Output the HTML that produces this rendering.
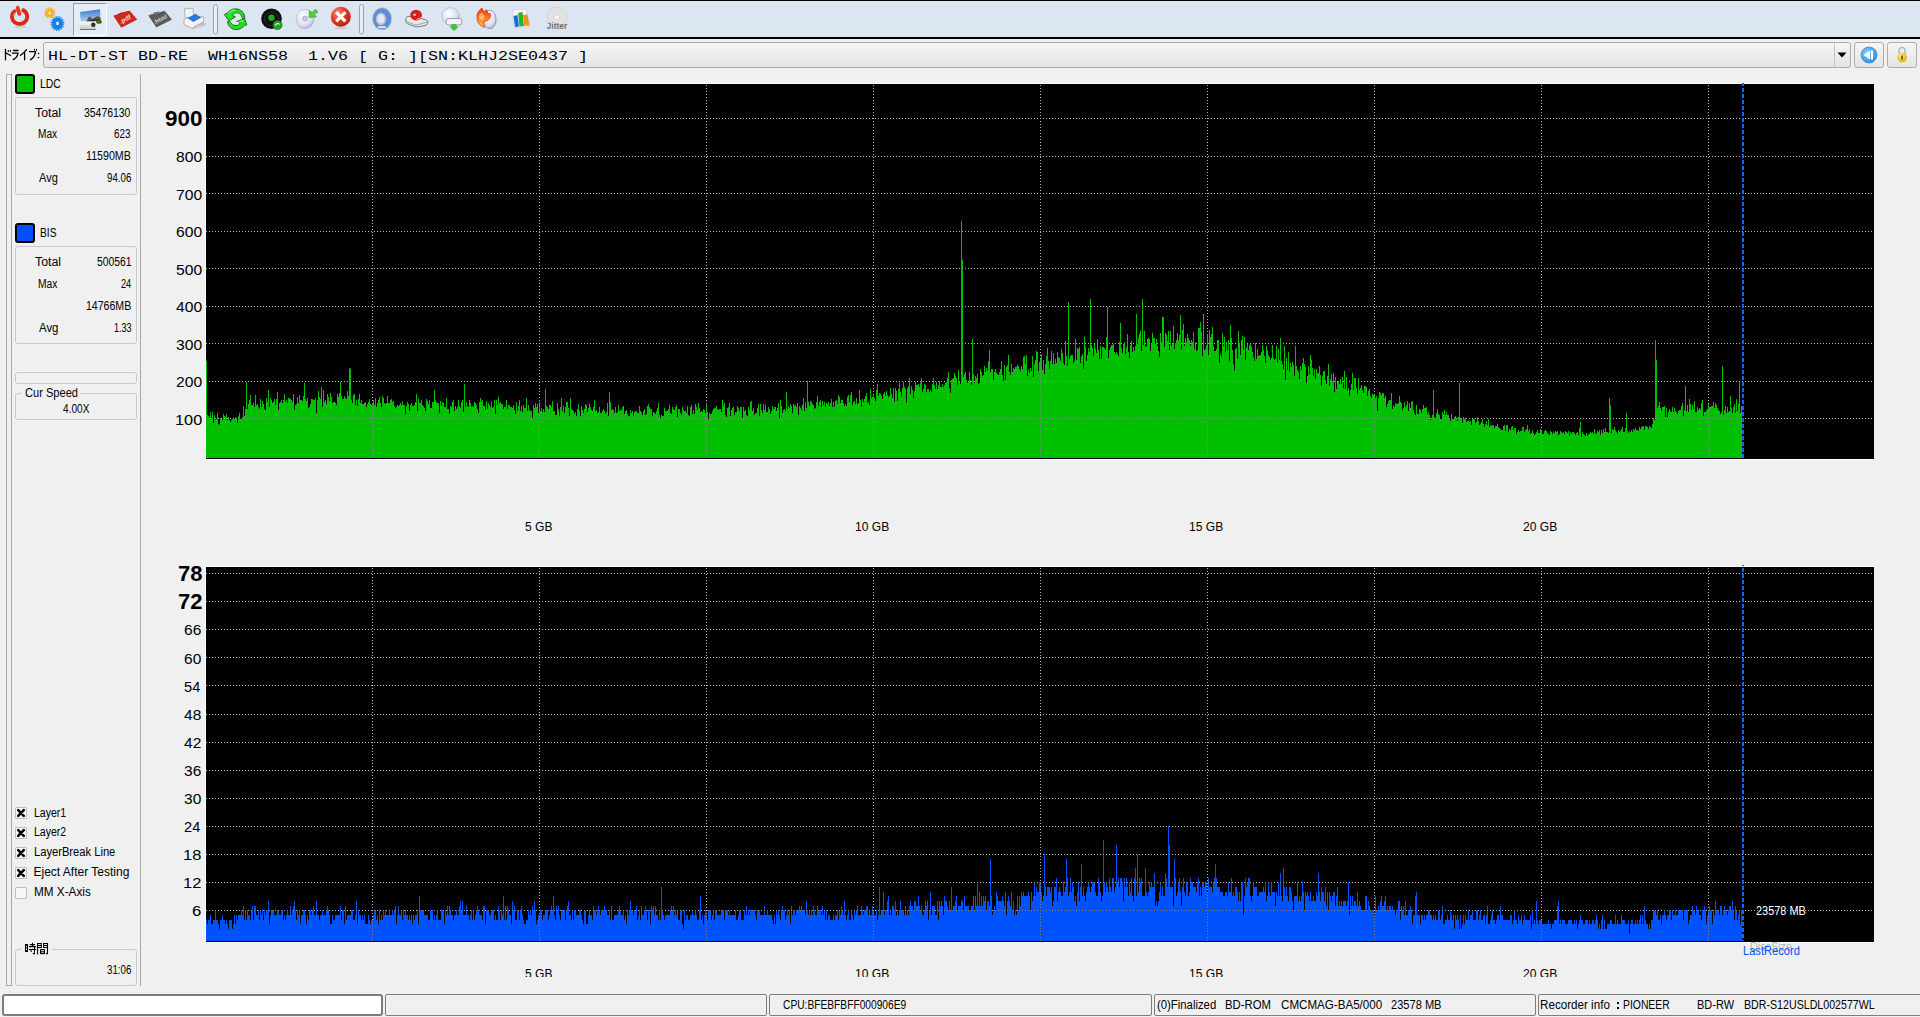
<!DOCTYPE html>
<html><head><meta charset="utf-8"><title>PX-Test</title>
<style>
html,body{margin:0;padding:0}
body{width:1920px;height:1017px;overflow:hidden;background:#f0f0f0;position:relative;font-family:"Liberation Sans",sans-serif;color:#000}
.charts{position:absolute;left:0;top:0}
.t{position:absolute;white-space:pre;line-height:1}
.r{text-align:right}
.b{position:absolute;box-sizing:border-box}
#tb{position:absolute;left:0;top:0;width:1920px;height:39px;box-sizing:border-box;background:#dce6f3;border-top:1px solid #000;border-bottom:2px solid #000}
.grp{position:absolute;box-sizing:border-box;border:1px solid #c9c9c9;border-radius:3px}
.cb{position:absolute;box-sizing:border-box;width:12px;height:12px;border:1px solid #bdbdbd;background:#f7f7f7;border-radius:1px}
.btn{position:absolute;box-sizing:border-box;border:1px solid #adadad;border-radius:3px;background:linear-gradient(#f4f4f4,#e2e2e2)}
.sp{position:absolute;box-sizing:border-box;border:1px solid #7d7d7d;border-radius:2px;background:#f0f0f0;top:994px;height:22px}

</style></head>
<body>

<svg class="charts" width="1920" height="1017" viewBox="0 0 1920 1017" shape-rendering="crispEdges">
 <defs>
  <clipPath id="cpL"><path d="M206 458V361H207V415H208V416H209V419H210V412H211V418H212V412H213V423H214V415H215V420H216V419H217V413H218V424H219V425H220V418H221V419H222V420H223V414H224V416H225V417H226V414H227V420H228V417H229V420H230V422H231V420H232V419H233V419H234V419H235V417H236V418H237V423H238V416H239V413H240V419H241V419H242V417H243V406H244V416H245V409H246V382H247V409H248V404H249V400H250V395H251V405H252V405H253V403H254V407H255V395H256V405H257V404H258V407H259V409H260V399H261V407H262V401H263V404H264V409H265V410H266V398H267V402H268V390H269V407H270V398H271V400H272V403H273V402H274V399H275V405H276V399H277V392H278V410H279V403H280V402H281V400H282V403H283V400H284V394H285V402H286V400H287V403H288V398H289V398H290V399H291V400H292V402H293V394H294V410H295V405H296V404H297V397H298V403H299V395H300V400H301V400H302V401H303V396H304V383H305V399H306V401H307V398H308V408H309V407H310V404H311V399H312V399H313V400H314V400H315V398H316V413H317V400H318V391H319V397H320V399H321V387H322V407H323V390H324V402H325V400H326V404H327V394H328V397H329V401H330V393H331V397H332V403H333V402H334V402H335V403H336V405H337V394H338V397H339V393H340V382H341V396H342V399H343V399H344V396H345V398H346V399H347V391H348V396H349V368H350V369H351V400H352V403H353V395H354V394H355V405H356V400H357V406H358V399H359V394H360V403H361V400H362V404H363V404H364V403H365V402H366V407H367V404H368V402H369V399H370V404H371V405H372V403H373V400H374V405H375V398H376V407H377V403H378V400H379V397H380V403H381V407H382V396H383V398H384V403H385V404H386V403H387V396H388V403H389V403H390V400H391V399H392V402H393V401H394V406H395V408H396V407H397V405H398V406H399V405H400V403H401V405H402V401H403V405H404V405H405V414H406V406H407V402H408V404H409V411H410V405H411V403H412V406H413V406H414V405H415V402H416V394H417V411H418V399H419V403H420V403H421V400H422V405H423V406H424V408H425V411H426V399H427V401H428V404H429V400H430V408H431V408H432V402H433V402H434V390H435V400H436V402H437V403H438V403H439V413H440V401H441V406H442V402H443V403H444V407H445V407H446V398H447V409H448V409H449V414H450V406H451V407H452V402H453V400H454V411H455V406H456V409H457V407H458V400H459V406H460V408H461V402H462V400H463V412H464V384H465V407H466V402H467V406H468V407H469V400H470V403H471V407H472V406H473V407H474V402H475V403H476V405H477V409H478V413H479V402H480V398H481V402H482V400H483V406H484V406H485V410H486V401H487V409H488V403H489V405H490V407H491V402H492V408H493V407H494V400H495V414H496V400H497V405H498V397H499V403H500V402H501V404H502V404H503V409H504V407H505V407H506V400H507V409H508V405H509V405H510V407H511V407H512V408H513V405H514V410H515V414H516V402H517V411H518V406H519V400H520V411H521V406H522V412H523V405H524V408H525V408H526V398H527V411H528V405H529V410H530V411H531V411H532V418H533V405H534V408H535V403H536V407H537V404H538V413H539V402H540V411H541V408H542V412H543V409H544V412H545V389H546V406H547V407H548V409H549V405H550V405H551V407H552V401H553V411H554V411H555V415H556V415H557V403H558V409H559V416H560V407H561V398H562V411H563V406H564V413H565V407H566V402H567V402H568V408H569V416H570V398H571V409H572V410H573V411H574V414H575V412H576V416H577V409H578V404H579V411H580V416H581V406H582V410H583V413H584V409H585V404H586V405H587V412H588V408H589V404H590V407H591V410H592V411H593V407H594V400H595V411H596V410H597V413H598V412H599V407H600V413H601V413H602V411H603V409H604V411H605V414H606V412H607V403H608V416H609V392H610V402H611V410H612V409H613V410H614V413H615V407H616V413H617V412H618V405H619V411H620V410H621V410H622V407H623V406H624V414H625V411H626V410H627V414H628V416H629V416H630V410H631V413H632V411H633V416H634V412H635V411H636V411H637V413H638V413H639V406H640V411H641V412H642V415H643V411H644V409H645V415H646V414H647V406H648V404H649V407H650V409H651V409H652V416H653V412H654V413H655V414H656V411H657V408H658V403H659V415H660V418H661V415H662V416H663V416H664V408H665V411H666V411H667V411H668V409H669V405H670V413H671V414H672V407H673V409H674V410H675V407H676V405H677V417H678V409H679V409H680V413H681V415H682V407H683V410H684V411H685V411H686V413H687V406H688V415H689V416H690V407H691V405H692V414H693V410H694V414H695V404H696V407H697V410H698V403H699V408H700V412H701V411H702V412H703V409H704V410H705V413H706V403H707V412H708V419H709V413H710V414H711V414H712V411H713V409H714V408H715V408H716V406H717V409H718V410H719V409H720V409H721V412H722V400H723V406H724V403H725V415H726V417H727V408H728V407H729V403H730V416H731V410H732V408H733V407H734V415H735V412H736V412H737V406H738V408H739V411H740V407H741V407H742V418H743V407H744V411H745V410H746V415H747V416H748V407H749V410H750V402H751V401H752V411H753V408H754V415H755V413H756V413H757V408H758V404H759V416H760V404H761V410H762V413H763V404H764V410H765V405H766V412H767V412H768V407H769V409H770V414H771V411H772V406H773V409H774V407H775V407H776V411H777V408H778V403H779V418H780V400H781V406H782V413H783V410H784V409H785V411H786V392H787V409H788V406H789V408H790V404H791V406H792V413H793V404H794V406H795V405H796V407H797V403H798V415H799V406H800V408H801V410H802V405H803V398H804V411H805V402H806V408H807V381H808V402H809V406H810V401H811V402H812V404H813V405H814V409H815V408H816V402H817V396H818V406H819V402H820V400H821V407H822V401H823V405H824V402H825V407H826V403H827V404H828V402H829V406H830V403H831V399H832V407H833V402H834V407H835V401H836V400H837V404H838V395H839V397H840V403H841V400H842V400H843V403H844V406H845V404H846V406H847V397H848V395H849V402H850V395H851V392H852V405H853V402H854V401H855V404H856V398H857V404H858V403H859V390H860V400H861V407H862V399H863V402H864V399H865V396H866V393H867V403H868V402H869V405H870V389H871V398H872V397H873V396H874V398H875V401H876V390H877V384H878V396H879V393H880V394H881V396H882V399H883V394H884V392H885V396H886V391H887V395H888V397H889V396H890V388H891V394H892V398H893V388H894V402H895V388H896V391H897V401H898V389H899V383H900V392H901V397H902V388H903V382H904V387H905V389H906V403H907V388H908V386H909V378H910V394H911V386H912V390H913V398H914V391H915V382H916V385H917V385H918V384H919V387H920V383H921V378H922V392H923V389H924V384H925V385H926V392H927V389H928V389H929V392H930V390H931V392H932V384H933V378H934V385H935V389H936V382H937V389H938V385H939V381H940V387H941V387H942V384H943V387H944V385H945V383H946V382H947V378H948V372H949V388H950V393H951V380H952V379H953V378H954V373H955V376H956V378H957V385H958V370H959V382H960V384H961V221H962V260H963V377H964V374H965V372H966V380H967V383H968V382H969V372H970V380H971V385H972V339H973V374H974V383H975V376H976V378H977V374H978V384H979V383H980V369H981V372H982V376H983V375H984V366H985V372H986V368H987V371H988V361H989V350H990V372H991V369H992V369H993V380H994V372H995V369H996V373H997V374H998V375H999V372H1000V369H1001V361H1002V375H1003V381H1004V365H1005V380H1006V367H1007V365H1008V355H1009V372H1010V375H1011V364H1012V372H1013V368H1014V369H1015V367H1016V367H1017V365H1018V366H1019V369H1020V371H1021V366H1022V369H1023V357H1024V356H1025V364H1026V355H1027V376H1028V370H1029V373H1030V368H1031V371H1032V356H1033V377H1034V364H1035V360H1036V351H1037V352H1038V371H1039V362H1040V359H1041V354H1042V370H1043V360H1044V374H1045V364H1046V356H1047V348H1048V361H1049V369H1050V361H1051V351H1052V364H1053V353H1054V364H1055V359H1056V363H1057V352H1058V357H1059V358H1060V361H1061V349H1062V353H1063V363H1064V365H1065V341H1066V356H1067V366H1068V302H1069V359H1070V356H1071V355H1072V355H1073V363H1074V361H1075V339H1076V360H1077V348H1078V349H1079V347H1080V363H1081V356H1082V354H1083V369H1084V337H1085V347H1086V361H1087V355H1088V348H1089V352H1090V299H1091V345H1092V348H1093V356H1094V344H1095V349H1096V353H1097V339H1098V350H1099V359H1100V346H1101V359H1102V347H1103V347H1104V348H1105V350H1106V337H1107V307H1108V358H1109V350H1110V347H1111V345H1112V345H1113V344H1114V352H1115V354H1116V352H1117V354H1118V356H1119V342H1120V323H1121V348H1122V353H1123V344H1124V342H1125V354H1126V347H1127V334H1128V352H1129V358H1130V345H1131V341H1132V352H1133V347H1134V351H1135V346H1136V314H1137V344H1138V338H1139V334H1140V331H1141V351H1142V299H1143V345H1144V331H1145V347H1146V346H1147V339H1148V338H1149V339H1150V351H1151V343H1152V333H1153V338H1154V338H1155V344H1156V339H1157V346H1158V351H1159V357H1160V333H1161V342H1162V317H1163V317H1164V347H1165V333H1166V335H1167V341H1168V331H1169V350H1170V331H1171V346H1172V344H1173V326H1174V349H1175V343H1176V340H1177V333H1178V340H1179V335H1180V315H1181V349H1182V330H1183V324H1184V346H1185V338H1186V342H1187V334H1188V338H1189V340H1190V346H1191V340H1192V342H1193V332H1194V349H1195V342H1196V351H1197V350H1198V328H1199V328H1200V322H1201V332H1202V356H1203V314H1204V350H1205V349H1206V345H1207V334H1208V355H1209V330H1210V337H1211V334H1212V327H1213V346H1214V351H1215V351H1216V349H1217V340H1218V340H1219V363H1220V354H1221V357H1222V333H1223V346H1224V337H1225V352H1226V342H1227V351H1228V340H1229V361H1230V325H1231V338H1232V350H1233V364H1234V371H1235V349H1236V348H1237V359H1238V331H1239V343H1240V355H1241V340H1242V336H1243V350H1244V337H1245V360H1246V348H1247V344H1248V350H1249V345H1250V344H1251V347H1252V352H1253V357H1254V361H1255V343H1256V359H1257V349H1258V356H1259V355H1260V355H1261V352H1262V345H1263V350H1264V356H1265V363H1266V346H1267V350H1268V355H1269V357H1270V360H1271V358H1272V345H1273V358H1274V360H1275V359H1276V346H1277V363H1278V349H1279V360H1280V338H1281V361H1282V364H1283V369H1284V346H1285V380H1286V358H1287V370H1288V352H1289V372H1290V363H1291V367H1292V362H1293V365H1294V376H1295V346H1296V366H1297V370H1298V372H1299V379H1300V366H1301V370H1302V363H1303V358H1304V364H1305V367H1306V383H1307V376H1308V366H1309V374H1310V355H1311V360H1312V368H1313V376H1314V369H1315V379H1316V369H1317V373H1318V373H1319V366H1320V375H1321V386H1322V376H1323V371H1324V371H1325V380H1326V384H1327V376H1328V364H1329V386H1330V379H1331V374H1332V381H1333V373H1334V392H1335V377H1336V389H1337V382H1338V381H1339V384H1340V379H1341V384H1342V377H1343V388H1344V371H1345V389H1346V377H1347V391H1348V388H1349V396H1350V390H1351V384H1352V373H1353V390H1354V378H1355V378H1356V388H1357V394H1358V378H1359V390H1360V388H1361V385H1362V390H1363V393H1364V386H1365V386H1366V387H1367V396H1368V391H1369V389H1370V396H1371V398H1372V394H1373V395H1374V395H1375V398H1376V396H1377V411H1378V398H1379V392H1380V393H1381V395H1382V393H1383V393H1384V398H1385V396H1386V407H1387V404H1388V401H1389V400H1390V400H1391V393H1392V409H1393V405H1394V407H1395V403H1396V404H1397V404H1398V403H1399V396H1400V402H1401V403H1402V410H1403V408H1404V402H1405V407H1406V405H1407V401H1408V411H1409V403H1410V408H1411V402H1412V401H1413V410H1414V413H1415V415H1416V405H1417V414H1418V414H1419V409H1420V410H1421V413H1422V409H1423V405H1424V408H1425V408H1426V407H1427V414H1428V412H1429V415H1430V420H1431V418H1432V415H1433V390H1434V417H1435V418H1436V413H1437V409H1438V414H1439V415H1440V419H1441V419H1442V412H1443V414H1444V410H1445V415H1446V412H1447V415H1448V415H1449V418H1450V421H1451V414H1452V419H1453V419H1454V417H1455V416H1456V418H1457V421H1458V417H1459V383H1460V419H1461V418H1462V423H1463V417H1464V419H1465V418H1466V422H1467V421H1468V420H1469V422H1470V421H1471V425H1472V419H1473V419H1474V419H1475V423H1476V422H1477V417H1478V421H1479V425H1480V424H1481V422H1482V419H1483V424H1484V427H1485V424H1486V421H1487V425H1488V419H1489V427H1490V425H1491V426H1492V425H1493V425H1494V428H1495V426H1496V426H1497V424H1498V427H1499V428H1500V429H1501V430H1502V430H1503V426H1504V425H1505V431H1506V425H1507V425H1508V432H1509V429H1510V430H1511V427H1512V426H1513V430H1514V428H1515V428H1516V434H1517V432H1518V430H1519V432H1520V431H1521V431H1522V427H1523V427H1524V432H1525V430H1526V429H1527V425H1528V431H1529V429H1530V434H1531V433H1532V430H1533V433H1534V435H1535V434H1536V432H1537V430H1538V433H1539V433H1540V429H1541V430H1542V434H1543V434H1544V431H1545V430H1546V431H1547V433H1548V434H1549V435H1550V431H1551V432H1552V434H1553V432H1554V433H1555V431H1556V432H1557V431H1558V435H1559V434H1560V431H1561V432H1562V433H1563V432H1564V434H1565V431H1566V432H1567V433H1568V431H1569V436H1570V432H1571V434H1572V432H1573V432H1574V433H1575V435H1576V433H1577V432H1578V435H1579V428H1580V422H1581V437H1582V432H1583V434H1584V435H1585V436H1586V433H1587V436H1588V434H1589V434H1590V432H1591V433H1592V432H1593V434H1594V429H1595V433H1596V434H1597V431H1598V432H1599V430H1600V435H1601V430H1602V433H1603V429H1604V432H1605V428H1606V432H1607V432H1608V433H1609V398H1610V405H1611V433H1612V429H1613V430H1614V427H1615V430H1616V432H1617V434H1618V430H1619V432H1620V431H1621V429H1622V427H1623V432H1624V432H1625V428H1626V413H1627V431H1628V433H1629V431H1630V432H1631V430H1632V432H1633V429H1634V430H1635V428H1636V430H1637V430H1638V431H1639V427H1640V429H1641V427H1642V426H1643V426H1644V430H1645V426H1646V426H1647V427H1648V429H1649V426H1650V427H1651V428H1652V424H1653V418H1654V420H1655V340H1656V360H1657V408H1658V406H1659V402H1660V408H1661V411H1662V407H1663V407H1664V406H1665V417H1666V408H1667V417H1668V412H1669V409H1670V411H1671V412H1672V407H1673V412H1674V408H1675V411H1676V412H1677V414H1678V411H1679V410H1680V410H1681V406H1682V403H1683V416H1684V410H1685V386H1686V411H1687V405H1688V412H1689V399H1690V404H1691V410H1692V405H1693V409H1694V401H1695V412H1696V412H1697V407H1698V410H1699V408H1700V409H1701V403H1702V400H1703V416H1704V412H1705V412H1706V410H1707V409H1708V404H1709V407H1710V407H1711V406H1712V406H1713V402H1714V408H1715V403H1716V405H1717V408H1718V410H1719V411H1720V414H1721V412H1722V366H1723V415H1724V410H1725V406H1726V413H1727V407H1728V412H1729V411H1730V396H1731V408H1732V413H1733V407H1734V404H1735V413H1736V399H1737V411H1738V404H1739V381H1740V413H1741V406H1742V458Z"/></clipPath>
  <clipPath id="cpB"><path d="M206 941V920H207V924H208V920H209V920H210V915H211V924H212V924H213V920H214V920H215V910H216V920H217V920H218V924H219V929H220V920H221V920H222V915H223V920H224V920H225V924H226V920H227V924H228V929H229V920H230V920H231V920H232V929H233V924H234V915H235V924H236V915H237V920H238V915H239V915H240V915H241V910H242V915H243V906H244V920H245V910H246V920H247V910H248V915H249V915H250V920H251V910H252V906H253V920H254V906H255V906H256V915H257V915H258V910H259V920H260V910H261V915H262V910H263V920H264V910H265V915H266V910H267V910H268V901H269V924H270V915H271V910H272V910H273V910H274V915H275V915H276V915H277V910H278V910H279V915H280V915H281V910H282V910H283V920H284V915H285V920H286V915H287V910H288V915H289V915H290V906H291V915H292V910H293V906H294V901H295V910H296V920H297V910H298V915H299V910H300V924H301V915H302V915H303V910H304V910H305V915H306V924H307V915H308V920H309V910H310V910H311V915H312V910H313V906H314V915H315V915H316V901H317V915H318V915H319V920H320V915H321V915H322V910H323V915H324V915H325V915H326V910H327V906H328V910H329V915H330V924H331V924H332V915H333V920H334V920H335V915H336V915H337V915H338V915H339V915H340V906H341V920H342V910H343V910H344V924H345V906H346V920H347V915H348V915H349V915H350V915H351V910H352V910H353V920H354V920H355V915H356V901H357V924H358V910H359V915H360V915H361V920H362V915H363V920H364V915H365V924H366V924H367V924H368V915H369V920H370V924H371V920H372V920H373V915H374V910H375V910H376V920H377V915H378V924H379V910H380V920H381V915H382V920H383V910H384V915H385V910H386V915H387V915H388V915H389V910H390V915H391V915H392V910H393V915H394V910H395V906H396V924H397V915H398V906H399V915H400V915H401V910H402V920H403V910H404V915H405V910H406V915H407V915H408V920H409V915H410V920H411V915H412V924H413V915H414V920H415V915H416V915H417V910H418V924H419V896H420V910H421V910H422V910H423V910H424V915H425V915H426V915H427V915H428V920H429V920H430V910H431V910H432V910H433V920H434V915H435V920H436V915H437V910H438V920H439V920H440V920H441V910H442V910H443V910H444V924H445V910H446V915H447V906H448V915H449V906H450V910H451V915H452V915H453V920H454V915H455V915H456V910H457V915H458V915H459V906H460V901H461V910H462V901H463V915H464V915H465V915H466V906H467V915H468V915H469V920H470V915H471V910H472V920H473V910H474V920H475V915H476V910H477V906H478V910H479V915H480V915H481V915H482V920H483V906H484V906H485V924H486V910H487V910H488V910H489V915H490V915H491V910H492V910H493V910H494V920H495V915H496V920H497V920H498V906H499V910H500V920H501V910H502V915H503V896H504V920H505V906H506V920H507V906H508V910H509V915H510V915H511V924H512V901H513V910H514V906H515V920H516V920H517V910H518V910H519V920H520V910H521V906H522V915H523V920H524V924H525V924H526V920H527V920H528V910H529V915H530V910H531V915H532V906H533V910H534V901H535V910H536V924H537V920H538V915H539V915H540V910H541V910H542V920H543V915H544V915H545V910H546V910H547V910H548V920H549V915H550V910H551V906H552V910H553V896H554V915H555V920H556V906H557V910H558V906H559V915H560V920H561V910H562V910H563V910H564V910H565V920H566V910H567V906H568V901H569V915H570V915H571V920H572V910H573V920H574V910H575V910H576V915H577V915H578V915H579V910H580V910H581V915H582V920H583V924H584V910H585V910H586V924H587V924H588V915H589V910H590V915H591V915H592V920H593V906H594V910H595V910H596V915H597V910H598V906H599V910H600V915H601V910H602V910H603V910H604V906H605V910H606V910H607V915H608V915H609V910H610V920H611V906H612V920H613V920H614V915H615V915H616V915H617V915H618V910H619V906H620V910H621V915H622V915H623V910H624V920H625V915H626V924H627V910H628V915H629V910H630V901H631V910H632V910H633V915H634V910H635V910H636V906H637V920H638V915H639V910H640V920H641V906H642V915H643V915H644V910H645V906H646V910H647V920H648V910H649V910H650V924H651V906H652V910H653V906H654V915H655V906H656V915H657V915H658V920H659V910H660V920H661V887H662V910H663V915H664V920H665V915H666V915H667V915H668V915H669V915H670V910H671V906H672V910H673V906H674V915H675V910H676V915H677V910H678V920H679V920H680V910H681V910H682V924H683V929H684V910H685V920H686V915H687V915H688V920H689V920H690V915H691V915H692V910H693V915H694V915H695V910H696V915H697V920H698V920H699V910H700V896H701V920H702V915H703V924H704V915H705V910H706V915H707V920H708V910H709V910H710V910H711V920H712V915H713V910H714V920H715V910H716V910H717V915H718V915H719V915H720V915H721V910H722V910H723V910H724V920H725V910H726V910H727V910H728V915H729V910H730V915H731V915H732V915H733V915H734V915H735V910H736V920H737V920H738V915H739V910H740V910H741V920H742V920H743V920H744V910H745V915H746V906H747V915H748V910H749V915H750V910H751V910H752V910H753V910H754V910H755V915H756V920H757V910H758V910H759V910H760V915H761V915H762V915H763V915H764V906H765V915H766V915H767V910H768V915H769V915H770V915H771V915H772V920H773V924H774V915H775V924H776V910H777V915H778V910H779V915H780V920H781V910H782V906H783V910H784V910H785V920H786V915H787V910H788V915H789V910H790V924H791V906H792V915H793V910H794V910H795V915H796V910H797V910H798V910H799V906H800V910H801V906H802V910H803V910H804V910H805V915H806V901H807V910H808V915H809V910H810V915H811V910H812V915H813V906H814V910H815V915H816V915H817V906H818V910H819V910H820V910H821V915H822V906H823V915H824V910H825V920H826V910H827V920H828V915H829V915H830V920H831V920H832V920H833V915H834V920H835V915H836V915H837V910H838V920H839V910H840V915H841V906H842V910H843V915H844V901H845V915H846V920H847V915H848V910H849V920H850V920H851V910H852V915H853V920H854V910H855V915H856V910H857V906H858V915H859V915H860V915H861V906H862V910H863V915H864V910H865V910H866V906H867V906H868V915H869V910H870V915H871V915H872V906H873V910H874V915H875V915H876V910H877V920H878V915H879V887H880V915H881V910H882V910H883V892H884V915H885V910H886V910H887V901H888V896H889V915H890V910H891V915H892V906H893V906H894V910H895V901H896V915H897V910H898V915H899V910H900V901H901V910H902V910H903V910H904V915H905V906H906V915H907V910H908V915H909V906H910V901H911V906H912V906H913V910H914V901H915V901H916V906H917V906H918V896H919V906H920V910H921V906H922V915H923V915H924V910H925V901H926V906H927V901H928V920H929V910H930V892H931V915H932V906H933V906H934V906H935V915H936V915H937V901H938V920H939V901H940V906H941V901H942V906H943V915H944V896H945V901H946V901H947V906H948V910H949V901H950V910H951V887H952V910H953V906H954V906H955V901H956V896H957V910H958V906H959V906H960V906H961V901H962V901H963V910H964V896H965V906H966V906H967V906H968V906H969V910H970V910H971V906H972V906H973V896H974V910H975V896H976V906H977V882H978V906H979V892H980V906H981V896H982V906H983V896H984V901H985V896H986V910H987V901H988V901H989V906H990V859H991V896H992V915H993V910H994V906H995V910H996V892H997V896H998V901H999V901H1000V901H1001V901H1002V896H1003V901H1004V906H1005V892H1006V915H1007V901H1008V896H1009V901H1010V906H1011V892H1012V910H1013V901H1014V915H1015V910H1016V915H1017V896H1018V910H1019V896H1020V906H1021V892H1022V896H1023V892H1024V896H1025V896H1026V896H1027V896H1028V892H1029V896H1030V910H1031V892H1032V901H1033V896H1034V882H1035V896H1036V887H1037V892H1038V892H1039V882H1040V882H1041V892H1042V901H1043V896H1044V854H1045V887H1046V896H1047V887H1048V887H1049V887H1050V892H1051V887H1052V906H1053V901H1054V887H1055V887H1056V878H1057V901H1058V892H1059V887H1060V892H1061V896H1062V896H1063V882H1064V892H1065V887H1066V859H1067V878H1068V896H1069V892H1070V878H1071V892H1072V882H1073V887H1074V901H1075V896H1076V906H1077V892H1078V882H1079V901H1080V887H1081V864H1082V896H1083V887H1084V896H1085V901H1086V892H1087V887H1088V882H1089V887H1090V892H1091V887H1092V882H1093V882H1094V882H1095V892H1096V896H1097V896H1098V878H1099V882H1100V892H1101V901H1102V896H1103V840H1104V882H1105V892H1106V882H1107V887H1108V892H1109V878H1110V887H1111V892H1112V878H1113V878H1114V892H1115V887H1116V845H1117V882H1118V878H1119V887H1120V878H1121V878H1122V882H1123V901H1124V878H1125V887H1126V878H1127V887H1128V896H1129V882H1130V892H1131V878H1132V896H1133V901H1134V878H1135V868H1136V896H1137V854H1138V892H1139V878H1140V882H1141V878H1142V896H1143V896H1144V896H1145V868H1146V892H1147V896H1148V892H1149V882H1150V887H1151V882H1152V887H1153V887H1154V873H1155V906H1156V901H1157V906H1158V901H1159V892H1160V882H1161V896H1162V887H1163V896H1164V896H1165V873H1166V878H1167V887H1168V826H1169V845H1170V887H1171V887H1172V887H1173V906H1174V859H1175V878H1176V896H1177V892H1178V882H1179V878H1180V892H1181V906H1182V887H1183V878H1184V892H1185V896H1186V882H1187V882H1188V896H1189V892H1190V878H1191V882H1192V882H1193V887H1194V887H1195V887H1196V892H1197V882H1198V878H1199V896H1200V887H1201V896H1202V882H1203V882H1204V887H1205V882H1206V882H1207V892H1208V878H1209V887H1210V887H1211V887H1212V892H1213V882H1214V878H1215V864H1216V878H1217V887H1218V887H1219V887H1220V892H1221V892H1222V892H1223V896H1224V896H1225V892H1226V892H1227V896H1228V882H1229V892H1230V892H1231V878H1232V896H1233V892H1234V896H1235V887H1236V887H1237V892H1238V901H1239V892H1240V901H1241V882H1242V882H1243V915H1244V896H1245V878H1246V887H1247V882H1248V878H1249V878H1250V896H1251V901H1252V896H1253V882H1254V887H1255V887H1256V887H1257V896H1258V896H1259V892H1260V892H1261V892H1262V892H1263V887H1264V892H1265V882H1266V901H1267V896H1268V882H1269V892H1270V896H1271V882H1272V892H1273V892H1274V892H1275V906H1276V892H1277V896H1278V882H1279V896H1280V873H1281V896H1282V901H1283V868H1284V887H1285V896H1286V887H1287V896H1288V901H1289V887H1290V887H1291V892H1292V901H1293V910H1294V896H1295V896H1296V896H1297V882H1298V901H1299V896H1300V901H1301V896H1302V882H1303V892H1304V910H1305V892H1306V896H1307V892H1308V896H1309V901H1310V892H1311V901H1312V901H1313V896H1314V901H1315V901H1316V892H1317V896H1318V873H1319V892H1320V901H1321V887H1322V892H1323V892H1324V901H1325V887H1326V906H1327V892H1328V910H1329V892H1330V896H1331V901H1332V896H1333V892H1334V892H1335V906H1336V896H1337V887H1338V906H1339V901H1340V906H1341V901H1342V906H1343V901H1344V901H1345V901H1346V906H1347V901H1348V882H1349V915H1350V896H1351V906H1352V896H1353V906H1354V901H1355V901H1356V906H1357V892H1358V906H1359V901H1360V906H1361V910H1362V910H1363V910H1364V910H1365V896H1366V896H1367V910H1368V901H1369V906H1370V910H1371V910H1372V910H1373V910H1374V915H1375V896H1376V910H1377V910H1378V906H1379V910H1380V901H1381V896H1382V906H1383V906H1384V901H1385V896H1386V910H1387V906H1388V910H1389V906H1390V906H1391V910H1392V906H1393V910H1394V910H1395V915H1396V910H1397V910H1398V901H1399V901H1400V920H1401V906H1402V910H1403V906H1404V915H1405V901H1406V915H1407V915H1408V910H1409V910H1410V906H1411V910H1412V924H1413V915H1414V915H1415V896H1416V892H1417V915H1418V915H1419V915H1420V924H1421V915H1422V915H1423V920H1424V915H1425V920H1426V915H1427V915H1428V910H1429V910H1430V915H1431V915H1432V920H1433V915H1434V920H1435V915H1436V920H1437V920H1438V910H1439V910H1440V920H1441V915H1442V906H1443V924H1444V924H1445V920H1446V920H1447V915H1448V920H1449V920H1450V910H1451V915H1452V920H1453V915H1454V929H1455V915H1456V920H1457V915H1458V920H1459V929H1460V915H1461V929H1462V924H1463V915H1464V924H1465V915H1466V920H1467V920H1468V910H1469V920H1470V915H1471V915H1472V910H1473V920H1474V920H1475V920H1476V910H1477V910H1478V920H1479V915H1480V910H1481V920H1482V920H1483V915H1484V915H1485V924H1486V915H1487V906H1488V924H1489V924H1490V920H1491V915H1492V910H1493V920H1494V920H1495V924H1496V920H1497V915H1498V915H1499V920H1500V906H1501V915H1502V915H1503V920H1504V920H1505V920H1506V920H1507V920H1508V920H1509V920H1510V915H1511V915H1512V924H1513V920H1514V910H1515V920H1516V920H1517V924H1518V915H1519V920H1520V920H1521V915H1522V924H1523V920H1524V915H1525V920H1526V920H1527V920H1528V920H1529V920H1530V915H1531V929H1532V910H1533V924H1534V920H1535V924H1536V901H1537V920H1538V924H1539V920H1540V920H1541V920H1542V924H1543V924H1544V924H1545V924H1546V924H1547V924H1548V920H1549V924H1550V924H1551V929H1552V924H1553V924H1554V920H1555V920H1556V920H1557V906H1558V901H1559V924H1560V920H1561V924H1562V920H1563V920H1564V920H1565V924H1566V924H1567V924H1568V920H1569V920H1570V920H1571V920H1572V924H1573V924H1574V920H1575V924H1576V920H1577V929H1578V924H1579V920H1580V915H1581V920H1582V920H1583V924H1584V924H1585V920H1586V920H1587V920H1588V924H1589V920H1590V924H1591V924H1592V920H1593V920H1594V924H1595V920H1596V915H1597V920H1598V929H1599V924H1600V929H1601V920H1602V915H1603V929H1604V920H1605V929H1606V929H1607V924H1608V924H1609V924H1610V920H1611V920H1612V924H1613V924H1614V924H1615V915H1616V924H1617V920H1618V924H1619V924H1620V924H1621V915H1622V920H1623V920H1624V920H1625V924H1626V924H1627V924H1628V920H1629V934H1630V924H1631V920H1632V920H1633V924H1634V924H1635V920H1636V924H1637V920H1638V924H1639V920H1640V915H1641V924H1642V915H1643V924H1644V906H1645V920H1646V924H1647V924H1648V929H1649V924H1650V929H1651V920H1652V920H1653V910H1654V910H1655V910H1656V915H1657V910H1658V920H1659V920H1660V915H1661V924H1662V915H1663V915H1664V910H1665V915H1666V920H1667V915H1668V915H1669V910H1670V910H1671V920H1672V910H1673V915H1674V915H1675V910H1676V915H1677V915H1678V910H1679V910H1680V910H1681V910H1682V910H1683V920H1684V910H1685V910H1686V910H1687V910H1688V924H1689V920H1690V915H1691V915H1692V906H1693V910H1694V910H1695V915H1696V906H1697V910H1698V910H1699V915H1700V915H1701V920H1702V910H1703V910H1704V906H1705V910H1706V924H1707V915H1708V910H1709V906H1710V910H1711V910H1712V924H1713V910H1714V915H1715V901H1716V910H1717V910H1718V910H1719V915H1720V906H1721V906H1722V915H1723V910H1724V906H1725V910H1726V910H1727V915H1728V910H1729V906H1730V906H1731V910H1732V901H1733V910H1734V920H1735V906H1736V910H1737V920H1738V915H1739V910H1740V924H1741V910H1742V941Z"/></clipPath>
 </defs>
 <rect x="205" y="83" width="1669" height="376" fill="#fff"/>
 <rect x="206" y="459" width="1668" height="1" fill="#fff"/>
 <rect x="206" y="84" width="1668" height="375" fill="#000"/>
 <g stroke="#b4b4b4" stroke-width="1" stroke-dasharray="1 2"><line x1="206" y1="418.5" x2="1874" y2="418.5"/><line x1="206" y1="381.5" x2="1874" y2="381.5"/><line x1="206" y1="343.5" x2="1874" y2="343.5"/><line x1="206" y1="306.5" x2="1874" y2="306.5"/><line x1="206" y1="268.5" x2="1874" y2="268.5"/><line x1="206" y1="231.5" x2="1874" y2="231.5"/><line x1="206" y1="193.5" x2="1874" y2="193.5"/><line x1="206" y1="156.5" x2="1874" y2="156.5"/><line x1="206" y1="118.5" x2="1874" y2="118.5"/><line x1="372.5" y1="85" x2="372.5" y2="459"/><line x1="539.5" y1="85" x2="539.5" y2="459"/><line x1="706.5" y1="85" x2="706.5" y2="459"/><line x1="873.5" y1="85" x2="873.5" y2="459"/><line x1="1040.5" y1="85" x2="1040.5" y2="459"/><line x1="1207.5" y1="85" x2="1207.5" y2="459"/><line x1="1374.5" y1="85" x2="1374.5" y2="459"/><line x1="1541.5" y1="85" x2="1541.5" y2="459"/><line x1="1708.5" y1="85" x2="1708.5" y2="459"/></g>
 <path d="M206 458V361H207V415H208V416H209V419H210V412H211V418H212V412H213V423H214V415H215V420H216V419H217V413H218V424H219V425H220V418H221V419H222V420H223V414H224V416H225V417H226V414H227V420H228V417H229V420H230V422H231V420H232V419H233V419H234V419H235V417H236V418H237V423H238V416H239V413H240V419H241V419H242V417H243V406H244V416H245V409H246V382H247V409H248V404H249V400H250V395H251V405H252V405H253V403H254V407H255V395H256V405H257V404H258V407H259V409H260V399H261V407H262V401H263V404H264V409H265V410H266V398H267V402H268V390H269V407H270V398H271V400H272V403H273V402H274V399H275V405H276V399H277V392H278V410H279V403H280V402H281V400H282V403H283V400H284V394H285V402H286V400H287V403H288V398H289V398H290V399H291V400H292V402H293V394H294V410H295V405H296V404H297V397H298V403H299V395H300V400H301V400H302V401H303V396H304V383H305V399H306V401H307V398H308V408H309V407H310V404H311V399H312V399H313V400H314V400H315V398H316V413H317V400H318V391H319V397H320V399H321V387H322V407H323V390H324V402H325V400H326V404H327V394H328V397H329V401H330V393H331V397H332V403H333V402H334V402H335V403H336V405H337V394H338V397H339V393H340V382H341V396H342V399H343V399H344V396H345V398H346V399H347V391H348V396H349V368H350V369H351V400H352V403H353V395H354V394H355V405H356V400H357V406H358V399H359V394H360V403H361V400H362V404H363V404H364V403H365V402H366V407H367V404H368V402H369V399H370V404H371V405H372V403H373V400H374V405H375V398H376V407H377V403H378V400H379V397H380V403H381V407H382V396H383V398H384V403H385V404H386V403H387V396H388V403H389V403H390V400H391V399H392V402H393V401H394V406H395V408H396V407H397V405H398V406H399V405H400V403H401V405H402V401H403V405H404V405H405V414H406V406H407V402H408V404H409V411H410V405H411V403H412V406H413V406H414V405H415V402H416V394H417V411H418V399H419V403H420V403H421V400H422V405H423V406H424V408H425V411H426V399H427V401H428V404H429V400H430V408H431V408H432V402H433V402H434V390H435V400H436V402H437V403H438V403H439V413H440V401H441V406H442V402H443V403H444V407H445V407H446V398H447V409H448V409H449V414H450V406H451V407H452V402H453V400H454V411H455V406H456V409H457V407H458V400H459V406H460V408H461V402H462V400H463V412H464V384H465V407H466V402H467V406H468V407H469V400H470V403H471V407H472V406H473V407H474V402H475V403H476V405H477V409H478V413H479V402H480V398H481V402H482V400H483V406H484V406H485V410H486V401H487V409H488V403H489V405H490V407H491V402H492V408H493V407H494V400H495V414H496V400H497V405H498V397H499V403H500V402H501V404H502V404H503V409H504V407H505V407H506V400H507V409H508V405H509V405H510V407H511V407H512V408H513V405H514V410H515V414H516V402H517V411H518V406H519V400H520V411H521V406H522V412H523V405H524V408H525V408H526V398H527V411H528V405H529V410H530V411H531V411H532V418H533V405H534V408H535V403H536V407H537V404H538V413H539V402H540V411H541V408H542V412H543V409H544V412H545V389H546V406H547V407H548V409H549V405H550V405H551V407H552V401H553V411H554V411H555V415H556V415H557V403H558V409H559V416H560V407H561V398H562V411H563V406H564V413H565V407H566V402H567V402H568V408H569V416H570V398H571V409H572V410H573V411H574V414H575V412H576V416H577V409H578V404H579V411H580V416H581V406H582V410H583V413H584V409H585V404H586V405H587V412H588V408H589V404H590V407H591V410H592V411H593V407H594V400H595V411H596V410H597V413H598V412H599V407H600V413H601V413H602V411H603V409H604V411H605V414H606V412H607V403H608V416H609V392H610V402H611V410H612V409H613V410H614V413H615V407H616V413H617V412H618V405H619V411H620V410H621V410H622V407H623V406H624V414H625V411H626V410H627V414H628V416H629V416H630V410H631V413H632V411H633V416H634V412H635V411H636V411H637V413H638V413H639V406H640V411H641V412H642V415H643V411H644V409H645V415H646V414H647V406H648V404H649V407H650V409H651V409H652V416H653V412H654V413H655V414H656V411H657V408H658V403H659V415H660V418H661V415H662V416H663V416H664V408H665V411H666V411H667V411H668V409H669V405H670V413H671V414H672V407H673V409H674V410H675V407H676V405H677V417H678V409H679V409H680V413H681V415H682V407H683V410H684V411H685V411H686V413H687V406H688V415H689V416H690V407H691V405H692V414H693V410H694V414H695V404H696V407H697V410H698V403H699V408H700V412H701V411H702V412H703V409H704V410H705V413H706V403H707V412H708V419H709V413H710V414H711V414H712V411H713V409H714V408H715V408H716V406H717V409H718V410H719V409H720V409H721V412H722V400H723V406H724V403H725V415H726V417H727V408H728V407H729V403H730V416H731V410H732V408H733V407H734V415H735V412H736V412H737V406H738V408H739V411H740V407H741V407H742V418H743V407H744V411H745V410H746V415H747V416H748V407H749V410H750V402H751V401H752V411H753V408H754V415H755V413H756V413H757V408H758V404H759V416H760V404H761V410H762V413H763V404H764V410H765V405H766V412H767V412H768V407H769V409H770V414H771V411H772V406H773V409H774V407H775V407H776V411H777V408H778V403H779V418H780V400H781V406H782V413H783V410H784V409H785V411H786V392H787V409H788V406H789V408H790V404H791V406H792V413H793V404H794V406H795V405H796V407H797V403H798V415H799V406H800V408H801V410H802V405H803V398H804V411H805V402H806V408H807V381H808V402H809V406H810V401H811V402H812V404H813V405H814V409H815V408H816V402H817V396H818V406H819V402H820V400H821V407H822V401H823V405H824V402H825V407H826V403H827V404H828V402H829V406H830V403H831V399H832V407H833V402H834V407H835V401H836V400H837V404H838V395H839V397H840V403H841V400H842V400H843V403H844V406H845V404H846V406H847V397H848V395H849V402H850V395H851V392H852V405H853V402H854V401H855V404H856V398H857V404H858V403H859V390H860V400H861V407H862V399H863V402H864V399H865V396H866V393H867V403H868V402H869V405H870V389H871V398H872V397H873V396H874V398H875V401H876V390H877V384H878V396H879V393H880V394H881V396H882V399H883V394H884V392H885V396H886V391H887V395H888V397H889V396H890V388H891V394H892V398H893V388H894V402H895V388H896V391H897V401H898V389H899V383H900V392H901V397H902V388H903V382H904V387H905V389H906V403H907V388H908V386H909V378H910V394H911V386H912V390H913V398H914V391H915V382H916V385H917V385H918V384H919V387H920V383H921V378H922V392H923V389H924V384H925V385H926V392H927V389H928V389H929V392H930V390H931V392H932V384H933V378H934V385H935V389H936V382H937V389H938V385H939V381H940V387H941V387H942V384H943V387H944V385H945V383H946V382H947V378H948V372H949V388H950V393H951V380H952V379H953V378H954V373H955V376H956V378H957V385H958V370H959V382H960V384H961V221H962V260H963V377H964V374H965V372H966V380H967V383H968V382H969V372H970V380H971V385H972V339H973V374H974V383H975V376H976V378H977V374H978V384H979V383H980V369H981V372H982V376H983V375H984V366H985V372H986V368H987V371H988V361H989V350H990V372H991V369H992V369H993V380H994V372H995V369H996V373H997V374H998V375H999V372H1000V369H1001V361H1002V375H1003V381H1004V365H1005V380H1006V367H1007V365H1008V355H1009V372H1010V375H1011V364H1012V372H1013V368H1014V369H1015V367H1016V367H1017V365H1018V366H1019V369H1020V371H1021V366H1022V369H1023V357H1024V356H1025V364H1026V355H1027V376H1028V370H1029V373H1030V368H1031V371H1032V356H1033V377H1034V364H1035V360H1036V351H1037V352H1038V371H1039V362H1040V359H1041V354H1042V370H1043V360H1044V374H1045V364H1046V356H1047V348H1048V361H1049V369H1050V361H1051V351H1052V364H1053V353H1054V364H1055V359H1056V363H1057V352H1058V357H1059V358H1060V361H1061V349H1062V353H1063V363H1064V365H1065V341H1066V356H1067V366H1068V302H1069V359H1070V356H1071V355H1072V355H1073V363H1074V361H1075V339H1076V360H1077V348H1078V349H1079V347H1080V363H1081V356H1082V354H1083V369H1084V337H1085V347H1086V361H1087V355H1088V348H1089V352H1090V299H1091V345H1092V348H1093V356H1094V344H1095V349H1096V353H1097V339H1098V350H1099V359H1100V346H1101V359H1102V347H1103V347H1104V348H1105V350H1106V337H1107V307H1108V358H1109V350H1110V347H1111V345H1112V345H1113V344H1114V352H1115V354H1116V352H1117V354H1118V356H1119V342H1120V323H1121V348H1122V353H1123V344H1124V342H1125V354H1126V347H1127V334H1128V352H1129V358H1130V345H1131V341H1132V352H1133V347H1134V351H1135V346H1136V314H1137V344H1138V338H1139V334H1140V331H1141V351H1142V299H1143V345H1144V331H1145V347H1146V346H1147V339H1148V338H1149V339H1150V351H1151V343H1152V333H1153V338H1154V338H1155V344H1156V339H1157V346H1158V351H1159V357H1160V333H1161V342H1162V317H1163V317H1164V347H1165V333H1166V335H1167V341H1168V331H1169V350H1170V331H1171V346H1172V344H1173V326H1174V349H1175V343H1176V340H1177V333H1178V340H1179V335H1180V315H1181V349H1182V330H1183V324H1184V346H1185V338H1186V342H1187V334H1188V338H1189V340H1190V346H1191V340H1192V342H1193V332H1194V349H1195V342H1196V351H1197V350H1198V328H1199V328H1200V322H1201V332H1202V356H1203V314H1204V350H1205V349H1206V345H1207V334H1208V355H1209V330H1210V337H1211V334H1212V327H1213V346H1214V351H1215V351H1216V349H1217V340H1218V340H1219V363H1220V354H1221V357H1222V333H1223V346H1224V337H1225V352H1226V342H1227V351H1228V340H1229V361H1230V325H1231V338H1232V350H1233V364H1234V371H1235V349H1236V348H1237V359H1238V331H1239V343H1240V355H1241V340H1242V336H1243V350H1244V337H1245V360H1246V348H1247V344H1248V350H1249V345H1250V344H1251V347H1252V352H1253V357H1254V361H1255V343H1256V359H1257V349H1258V356H1259V355H1260V355H1261V352H1262V345H1263V350H1264V356H1265V363H1266V346H1267V350H1268V355H1269V357H1270V360H1271V358H1272V345H1273V358H1274V360H1275V359H1276V346H1277V363H1278V349H1279V360H1280V338H1281V361H1282V364H1283V369H1284V346H1285V380H1286V358H1287V370H1288V352H1289V372H1290V363H1291V367H1292V362H1293V365H1294V376H1295V346H1296V366H1297V370H1298V372H1299V379H1300V366H1301V370H1302V363H1303V358H1304V364H1305V367H1306V383H1307V376H1308V366H1309V374H1310V355H1311V360H1312V368H1313V376H1314V369H1315V379H1316V369H1317V373H1318V373H1319V366H1320V375H1321V386H1322V376H1323V371H1324V371H1325V380H1326V384H1327V376H1328V364H1329V386H1330V379H1331V374H1332V381H1333V373H1334V392H1335V377H1336V389H1337V382H1338V381H1339V384H1340V379H1341V384H1342V377H1343V388H1344V371H1345V389H1346V377H1347V391H1348V388H1349V396H1350V390H1351V384H1352V373H1353V390H1354V378H1355V378H1356V388H1357V394H1358V378H1359V390H1360V388H1361V385H1362V390H1363V393H1364V386H1365V386H1366V387H1367V396H1368V391H1369V389H1370V396H1371V398H1372V394H1373V395H1374V395H1375V398H1376V396H1377V411H1378V398H1379V392H1380V393H1381V395H1382V393H1383V393H1384V398H1385V396H1386V407H1387V404H1388V401H1389V400H1390V400H1391V393H1392V409H1393V405H1394V407H1395V403H1396V404H1397V404H1398V403H1399V396H1400V402H1401V403H1402V410H1403V408H1404V402H1405V407H1406V405H1407V401H1408V411H1409V403H1410V408H1411V402H1412V401H1413V410H1414V413H1415V415H1416V405H1417V414H1418V414H1419V409H1420V410H1421V413H1422V409H1423V405H1424V408H1425V408H1426V407H1427V414H1428V412H1429V415H1430V420H1431V418H1432V415H1433V390H1434V417H1435V418H1436V413H1437V409H1438V414H1439V415H1440V419H1441V419H1442V412H1443V414H1444V410H1445V415H1446V412H1447V415H1448V415H1449V418H1450V421H1451V414H1452V419H1453V419H1454V417H1455V416H1456V418H1457V421H1458V417H1459V383H1460V419H1461V418H1462V423H1463V417H1464V419H1465V418H1466V422H1467V421H1468V420H1469V422H1470V421H1471V425H1472V419H1473V419H1474V419H1475V423H1476V422H1477V417H1478V421H1479V425H1480V424H1481V422H1482V419H1483V424H1484V427H1485V424H1486V421H1487V425H1488V419H1489V427H1490V425H1491V426H1492V425H1493V425H1494V428H1495V426H1496V426H1497V424H1498V427H1499V428H1500V429H1501V430H1502V430H1503V426H1504V425H1505V431H1506V425H1507V425H1508V432H1509V429H1510V430H1511V427H1512V426H1513V430H1514V428H1515V428H1516V434H1517V432H1518V430H1519V432H1520V431H1521V431H1522V427H1523V427H1524V432H1525V430H1526V429H1527V425H1528V431H1529V429H1530V434H1531V433H1532V430H1533V433H1534V435H1535V434H1536V432H1537V430H1538V433H1539V433H1540V429H1541V430H1542V434H1543V434H1544V431H1545V430H1546V431H1547V433H1548V434H1549V435H1550V431H1551V432H1552V434H1553V432H1554V433H1555V431H1556V432H1557V431H1558V435H1559V434H1560V431H1561V432H1562V433H1563V432H1564V434H1565V431H1566V432H1567V433H1568V431H1569V436H1570V432H1571V434H1572V432H1573V432H1574V433H1575V435H1576V433H1577V432H1578V435H1579V428H1580V422H1581V437H1582V432H1583V434H1584V435H1585V436H1586V433H1587V436H1588V434H1589V434H1590V432H1591V433H1592V432H1593V434H1594V429H1595V433H1596V434H1597V431H1598V432H1599V430H1600V435H1601V430H1602V433H1603V429H1604V432H1605V428H1606V432H1607V432H1608V433H1609V398H1610V405H1611V433H1612V429H1613V430H1614V427H1615V430H1616V432H1617V434H1618V430H1619V432H1620V431H1621V429H1622V427H1623V432H1624V432H1625V428H1626V413H1627V431H1628V433H1629V431H1630V432H1631V430H1632V432H1633V429H1634V430H1635V428H1636V430H1637V430H1638V431H1639V427H1640V429H1641V427H1642V426H1643V426H1644V430H1645V426H1646V426H1647V427H1648V429H1649V426H1650V427H1651V428H1652V424H1653V418H1654V420H1655V340H1656V360H1657V408H1658V406H1659V402H1660V408H1661V411H1662V407H1663V407H1664V406H1665V417H1666V408H1667V417H1668V412H1669V409H1670V411H1671V412H1672V407H1673V412H1674V408H1675V411H1676V412H1677V414H1678V411H1679V410H1680V410H1681V406H1682V403H1683V416H1684V410H1685V386H1686V411H1687V405H1688V412H1689V399H1690V404H1691V410H1692V405H1693V409H1694V401H1695V412H1696V412H1697V407H1698V410H1699V408H1700V409H1701V403H1702V400H1703V416H1704V412H1705V412H1706V410H1707V409H1708V404H1709V407H1710V407H1711V406H1712V406H1713V402H1714V408H1715V403H1716V405H1717V408H1718V410H1719V411H1720V414H1721V412H1722V366H1723V415H1724V410H1725V406H1726V413H1727V407H1728V412H1729V411H1730V396H1731V408H1732V413H1733V407H1734V404H1735V413H1736V399H1737V411H1738V404H1739V381H1740V413H1741V406H1742V458Z" fill="#00c000"/>
 <g stroke="#8a8290" stroke-width="1" stroke-dasharray="1 2" clip-path="url(#cpL)"><line x1="206" y1="418.5" x2="1874" y2="418.5"/><line x1="206" y1="381.5" x2="1874" y2="381.5"/><line x1="206" y1="343.5" x2="1874" y2="343.5"/><line x1="206" y1="306.5" x2="1874" y2="306.5"/><line x1="206" y1="268.5" x2="1874" y2="268.5"/><line x1="206" y1="231.5" x2="1874" y2="231.5"/><line x1="206" y1="193.5" x2="1874" y2="193.5"/><line x1="206" y1="156.5" x2="1874" y2="156.5"/><line x1="206" y1="118.5" x2="1874" y2="118.5"/><line x1="372.5" y1="85" x2="372.5" y2="459"/><line x1="539.5" y1="85" x2="539.5" y2="459"/><line x1="706.5" y1="85" x2="706.5" y2="459"/><line x1="873.5" y1="85" x2="873.5" y2="459"/><line x1="1040.5" y1="85" x2="1040.5" y2="459"/><line x1="1207.5" y1="85" x2="1207.5" y2="459"/><line x1="1374.5" y1="85" x2="1374.5" y2="459"/><line x1="1541.5" y1="85" x2="1541.5" y2="459"/><line x1="1708.5" y1="85" x2="1708.5" y2="459"/></g>
 <line x1="1743" y1="83" x2="1743" y2="459" stroke="#1464ff" stroke-width="2" stroke-dasharray="4 2" stroke-dashoffset="1"/>

 <rect x="205" y="566" width="1669" height="376" fill="#fff"/>
 <rect x="206" y="942" width="1668" height="1" fill="#fff"/>
 <rect x="206" y="567" width="1668" height="375" fill="#000"/>
 <g stroke="#b4b4b4" stroke-width="1" stroke-dasharray="1 2"><line x1="206" y1="573.5" x2="1874" y2="573.5"/><line x1="206" y1="601.5" x2="1874" y2="601.5"/><line x1="206" y1="629.5" x2="1874" y2="629.5"/><line x1="206" y1="657.5" x2="1874" y2="657.5"/><line x1="206" y1="685.5" x2="1874" y2="685.5"/><line x1="206" y1="714.5" x2="1874" y2="714.5"/><line x1="206" y1="742.5" x2="1874" y2="742.5"/><line x1="206" y1="770.5" x2="1874" y2="770.5"/><line x1="206" y1="798.5" x2="1874" y2="798.5"/><line x1="206" y1="826.5" x2="1874" y2="826.5"/><line x1="206" y1="854.5" x2="1874" y2="854.5"/><line x1="206" y1="882.5" x2="1874" y2="882.5"/><line x1="206" y1="910.5" x2="1874" y2="910.5"/><line x1="372.5" y1="568" x2="372.5" y2="942"/><line x1="539.5" y1="568" x2="539.5" y2="942"/><line x1="706.5" y1="568" x2="706.5" y2="942"/><line x1="873.5" y1="568" x2="873.5" y2="942"/><line x1="1040.5" y1="568" x2="1040.5" y2="942"/><line x1="1207.5" y1="568" x2="1207.5" y2="942"/><line x1="1374.5" y1="568" x2="1374.5" y2="942"/><line x1="1541.5" y1="568" x2="1541.5" y2="942"/><line x1="1708.5" y1="568" x2="1708.5" y2="942"/></g>
 <path d="M206 941V920H207V924H208V920H209V920H210V915H211V924H212V924H213V920H214V920H215V910H216V920H217V920H218V924H219V929H220V920H221V920H222V915H223V920H224V920H225V924H226V920H227V924H228V929H229V920H230V920H231V920H232V929H233V924H234V915H235V924H236V915H237V920H238V915H239V915H240V915H241V910H242V915H243V906H244V920H245V910H246V920H247V910H248V915H249V915H250V920H251V910H252V906H253V920H254V906H255V906H256V915H257V915H258V910H259V920H260V910H261V915H262V910H263V920H264V910H265V915H266V910H267V910H268V901H269V924H270V915H271V910H272V910H273V910H274V915H275V915H276V915H277V910H278V910H279V915H280V915H281V910H282V910H283V920H284V915H285V920H286V915H287V910H288V915H289V915H290V906H291V915H292V910H293V906H294V901H295V910H296V920H297V910H298V915H299V910H300V924H301V915H302V915H303V910H304V910H305V915H306V924H307V915H308V920H309V910H310V910H311V915H312V910H313V906H314V915H315V915H316V901H317V915H318V915H319V920H320V915H321V915H322V910H323V915H324V915H325V915H326V910H327V906H328V910H329V915H330V924H331V924H332V915H333V920H334V920H335V915H336V915H337V915H338V915H339V915H340V906H341V920H342V910H343V910H344V924H345V906H346V920H347V915H348V915H349V915H350V915H351V910H352V910H353V920H354V920H355V915H356V901H357V924H358V910H359V915H360V915H361V920H362V915H363V920H364V915H365V924H366V924H367V924H368V915H369V920H370V924H371V920H372V920H373V915H374V910H375V910H376V920H377V915H378V924H379V910H380V920H381V915H382V920H383V910H384V915H385V910H386V915H387V915H388V915H389V910H390V915H391V915H392V910H393V915H394V910H395V906H396V924H397V915H398V906H399V915H400V915H401V910H402V920H403V910H404V915H405V910H406V915H407V915H408V920H409V915H410V920H411V915H412V924H413V915H414V920H415V915H416V915H417V910H418V924H419V896H420V910H421V910H422V910H423V910H424V915H425V915H426V915H427V915H428V920H429V920H430V910H431V910H432V910H433V920H434V915H435V920H436V915H437V910H438V920H439V920H440V920H441V910H442V910H443V910H444V924H445V910H446V915H447V906H448V915H449V906H450V910H451V915H452V915H453V920H454V915H455V915H456V910H457V915H458V915H459V906H460V901H461V910H462V901H463V915H464V915H465V915H466V906H467V915H468V915H469V920H470V915H471V910H472V920H473V910H474V920H475V915H476V910H477V906H478V910H479V915H480V915H481V915H482V920H483V906H484V906H485V924H486V910H487V910H488V910H489V915H490V915H491V910H492V910H493V910H494V920H495V915H496V920H497V920H498V906H499V910H500V920H501V910H502V915H503V896H504V920H505V906H506V920H507V906H508V910H509V915H510V915H511V924H512V901H513V910H514V906H515V920H516V920H517V910H518V910H519V920H520V910H521V906H522V915H523V920H524V924H525V924H526V920H527V920H528V910H529V915H530V910H531V915H532V906H533V910H534V901H535V910H536V924H537V920H538V915H539V915H540V910H541V910H542V920H543V915H544V915H545V910H546V910H547V910H548V920H549V915H550V910H551V906H552V910H553V896H554V915H555V920H556V906H557V910H558V906H559V915H560V920H561V910H562V910H563V910H564V910H565V920H566V910H567V906H568V901H569V915H570V915H571V920H572V910H573V920H574V910H575V910H576V915H577V915H578V915H579V910H580V910H581V915H582V920H583V924H584V910H585V910H586V924H587V924H588V915H589V910H590V915H591V915H592V920H593V906H594V910H595V910H596V915H597V910H598V906H599V910H600V915H601V910H602V910H603V910H604V906H605V910H606V910H607V915H608V915H609V910H610V920H611V906H612V920H613V920H614V915H615V915H616V915H617V915H618V910H619V906H620V910H621V915H622V915H623V910H624V920H625V915H626V924H627V910H628V915H629V910H630V901H631V910H632V910H633V915H634V910H635V910H636V906H637V920H638V915H639V910H640V920H641V906H642V915H643V915H644V910H645V906H646V910H647V920H648V910H649V910H650V924H651V906H652V910H653V906H654V915H655V906H656V915H657V915H658V920H659V910H660V920H661V887H662V910H663V915H664V920H665V915H666V915H667V915H668V915H669V915H670V910H671V906H672V910H673V906H674V915H675V910H676V915H677V910H678V920H679V920H680V910H681V910H682V924H683V929H684V910H685V920H686V915H687V915H688V920H689V920H690V915H691V915H692V910H693V915H694V915H695V910H696V915H697V920H698V920H699V910H700V896H701V920H702V915H703V924H704V915H705V910H706V915H707V920H708V910H709V910H710V910H711V920H712V915H713V910H714V920H715V910H716V910H717V915H718V915H719V915H720V915H721V910H722V910H723V910H724V920H725V910H726V910H727V910H728V915H729V910H730V915H731V915H732V915H733V915H734V915H735V910H736V920H737V920H738V915H739V910H740V910H741V920H742V920H743V920H744V910H745V915H746V906H747V915H748V910H749V915H750V910H751V910H752V910H753V910H754V910H755V915H756V920H757V910H758V910H759V910H760V915H761V915H762V915H763V915H764V906H765V915H766V915H767V910H768V915H769V915H770V915H771V915H772V920H773V924H774V915H775V924H776V910H777V915H778V910H779V915H780V920H781V910H782V906H783V910H784V910H785V920H786V915H787V910H788V915H789V910H790V924H791V906H792V915H793V910H794V910H795V915H796V910H797V910H798V910H799V906H800V910H801V906H802V910H803V910H804V910H805V915H806V901H807V910H808V915H809V910H810V915H811V910H812V915H813V906H814V910H815V915H816V915H817V906H818V910H819V910H820V910H821V915H822V906H823V915H824V910H825V920H826V910H827V920H828V915H829V915H830V920H831V920H832V920H833V915H834V920H835V915H836V915H837V910H838V920H839V910H840V915H841V906H842V910H843V915H844V901H845V915H846V920H847V915H848V910H849V920H850V920H851V910H852V915H853V920H854V910H855V915H856V910H857V906H858V915H859V915H860V915H861V906H862V910H863V915H864V910H865V910H866V906H867V906H868V915H869V910H870V915H871V915H872V906H873V910H874V915H875V915H876V910H877V920H878V915H879V887H880V915H881V910H882V910H883V892H884V915H885V910H886V910H887V901H888V896H889V915H890V910H891V915H892V906H893V906H894V910H895V901H896V915H897V910H898V915H899V910H900V901H901V910H902V910H903V910H904V915H905V906H906V915H907V910H908V915H909V906H910V901H911V906H912V906H913V910H914V901H915V901H916V906H917V906H918V896H919V906H920V910H921V906H922V915H923V915H924V910H925V901H926V906H927V901H928V920H929V910H930V892H931V915H932V906H933V906H934V906H935V915H936V915H937V901H938V920H939V901H940V906H941V901H942V906H943V915H944V896H945V901H946V901H947V906H948V910H949V901H950V910H951V887H952V910H953V906H954V906H955V901H956V896H957V910H958V906H959V906H960V906H961V901H962V901H963V910H964V896H965V906H966V906H967V906H968V906H969V910H970V910H971V906H972V906H973V896H974V910H975V896H976V906H977V882H978V906H979V892H980V906H981V896H982V906H983V896H984V901H985V896H986V910H987V901H988V901H989V906H990V859H991V896H992V915H993V910H994V906H995V910H996V892H997V896H998V901H999V901H1000V901H1001V901H1002V896H1003V901H1004V906H1005V892H1006V915H1007V901H1008V896H1009V901H1010V906H1011V892H1012V910H1013V901H1014V915H1015V910H1016V915H1017V896H1018V910H1019V896H1020V906H1021V892H1022V896H1023V892H1024V896H1025V896H1026V896H1027V896H1028V892H1029V896H1030V910H1031V892H1032V901H1033V896H1034V882H1035V896H1036V887H1037V892H1038V892H1039V882H1040V882H1041V892H1042V901H1043V896H1044V854H1045V887H1046V896H1047V887H1048V887H1049V887H1050V892H1051V887H1052V906H1053V901H1054V887H1055V887H1056V878H1057V901H1058V892H1059V887H1060V892H1061V896H1062V896H1063V882H1064V892H1065V887H1066V859H1067V878H1068V896H1069V892H1070V878H1071V892H1072V882H1073V887H1074V901H1075V896H1076V906H1077V892H1078V882H1079V901H1080V887H1081V864H1082V896H1083V887H1084V896H1085V901H1086V892H1087V887H1088V882H1089V887H1090V892H1091V887H1092V882H1093V882H1094V882H1095V892H1096V896H1097V896H1098V878H1099V882H1100V892H1101V901H1102V896H1103V840H1104V882H1105V892H1106V882H1107V887H1108V892H1109V878H1110V887H1111V892H1112V878H1113V878H1114V892H1115V887H1116V845H1117V882H1118V878H1119V887H1120V878H1121V878H1122V882H1123V901H1124V878H1125V887H1126V878H1127V887H1128V896H1129V882H1130V892H1131V878H1132V896H1133V901H1134V878H1135V868H1136V896H1137V854H1138V892H1139V878H1140V882H1141V878H1142V896H1143V896H1144V896H1145V868H1146V892H1147V896H1148V892H1149V882H1150V887H1151V882H1152V887H1153V887H1154V873H1155V906H1156V901H1157V906H1158V901H1159V892H1160V882H1161V896H1162V887H1163V896H1164V896H1165V873H1166V878H1167V887H1168V826H1169V845H1170V887H1171V887H1172V887H1173V906H1174V859H1175V878H1176V896H1177V892H1178V882H1179V878H1180V892H1181V906H1182V887H1183V878H1184V892H1185V896H1186V882H1187V882H1188V896H1189V892H1190V878H1191V882H1192V882H1193V887H1194V887H1195V887H1196V892H1197V882H1198V878H1199V896H1200V887H1201V896H1202V882H1203V882H1204V887H1205V882H1206V882H1207V892H1208V878H1209V887H1210V887H1211V887H1212V892H1213V882H1214V878H1215V864H1216V878H1217V887H1218V887H1219V887H1220V892H1221V892H1222V892H1223V896H1224V896H1225V892H1226V892H1227V896H1228V882H1229V892H1230V892H1231V878H1232V896H1233V892H1234V896H1235V887H1236V887H1237V892H1238V901H1239V892H1240V901H1241V882H1242V882H1243V915H1244V896H1245V878H1246V887H1247V882H1248V878H1249V878H1250V896H1251V901H1252V896H1253V882H1254V887H1255V887H1256V887H1257V896H1258V896H1259V892H1260V892H1261V892H1262V892H1263V887H1264V892H1265V882H1266V901H1267V896H1268V882H1269V892H1270V896H1271V882H1272V892H1273V892H1274V892H1275V906H1276V892H1277V896H1278V882H1279V896H1280V873H1281V896H1282V901H1283V868H1284V887H1285V896H1286V887H1287V896H1288V901H1289V887H1290V887H1291V892H1292V901H1293V910H1294V896H1295V896H1296V896H1297V882H1298V901H1299V896H1300V901H1301V896H1302V882H1303V892H1304V910H1305V892H1306V896H1307V892H1308V896H1309V901H1310V892H1311V901H1312V901H1313V896H1314V901H1315V901H1316V892H1317V896H1318V873H1319V892H1320V901H1321V887H1322V892H1323V892H1324V901H1325V887H1326V906H1327V892H1328V910H1329V892H1330V896H1331V901H1332V896H1333V892H1334V892H1335V906H1336V896H1337V887H1338V906H1339V901H1340V906H1341V901H1342V906H1343V901H1344V901H1345V901H1346V906H1347V901H1348V882H1349V915H1350V896H1351V906H1352V896H1353V906H1354V901H1355V901H1356V906H1357V892H1358V906H1359V901H1360V906H1361V910H1362V910H1363V910H1364V910H1365V896H1366V896H1367V910H1368V901H1369V906H1370V910H1371V910H1372V910H1373V910H1374V915H1375V896H1376V910H1377V910H1378V906H1379V910H1380V901H1381V896H1382V906H1383V906H1384V901H1385V896H1386V910H1387V906H1388V910H1389V906H1390V906H1391V910H1392V906H1393V910H1394V910H1395V915H1396V910H1397V910H1398V901H1399V901H1400V920H1401V906H1402V910H1403V906H1404V915H1405V901H1406V915H1407V915H1408V910H1409V910H1410V906H1411V910H1412V924H1413V915H1414V915H1415V896H1416V892H1417V915H1418V915H1419V915H1420V924H1421V915H1422V915H1423V920H1424V915H1425V920H1426V915H1427V915H1428V910H1429V910H1430V915H1431V915H1432V920H1433V915H1434V920H1435V915H1436V920H1437V920H1438V910H1439V910H1440V920H1441V915H1442V906H1443V924H1444V924H1445V920H1446V920H1447V915H1448V920H1449V920H1450V910H1451V915H1452V920H1453V915H1454V929H1455V915H1456V920H1457V915H1458V920H1459V929H1460V915H1461V929H1462V924H1463V915H1464V924H1465V915H1466V920H1467V920H1468V910H1469V920H1470V915H1471V915H1472V910H1473V920H1474V920H1475V920H1476V910H1477V910H1478V920H1479V915H1480V910H1481V920H1482V920H1483V915H1484V915H1485V924H1486V915H1487V906H1488V924H1489V924H1490V920H1491V915H1492V910H1493V920H1494V920H1495V924H1496V920H1497V915H1498V915H1499V920H1500V906H1501V915H1502V915H1503V920H1504V920H1505V920H1506V920H1507V920H1508V920H1509V920H1510V915H1511V915H1512V924H1513V920H1514V910H1515V920H1516V920H1517V924H1518V915H1519V920H1520V920H1521V915H1522V924H1523V920H1524V915H1525V920H1526V920H1527V920H1528V920H1529V920H1530V915H1531V929H1532V910H1533V924H1534V920H1535V924H1536V901H1537V920H1538V924H1539V920H1540V920H1541V920H1542V924H1543V924H1544V924H1545V924H1546V924H1547V924H1548V920H1549V924H1550V924H1551V929H1552V924H1553V924H1554V920H1555V920H1556V920H1557V906H1558V901H1559V924H1560V920H1561V924H1562V920H1563V920H1564V920H1565V924H1566V924H1567V924H1568V920H1569V920H1570V920H1571V920H1572V924H1573V924H1574V920H1575V924H1576V920H1577V929H1578V924H1579V920H1580V915H1581V920H1582V920H1583V924H1584V924H1585V920H1586V920H1587V920H1588V924H1589V920H1590V924H1591V924H1592V920H1593V920H1594V924H1595V920H1596V915H1597V920H1598V929H1599V924H1600V929H1601V920H1602V915H1603V929H1604V920H1605V929H1606V929H1607V924H1608V924H1609V924H1610V920H1611V920H1612V924H1613V924H1614V924H1615V915H1616V924H1617V920H1618V924H1619V924H1620V924H1621V915H1622V920H1623V920H1624V920H1625V924H1626V924H1627V924H1628V920H1629V934H1630V924H1631V920H1632V920H1633V924H1634V924H1635V920H1636V924H1637V920H1638V924H1639V920H1640V915H1641V924H1642V915H1643V924H1644V906H1645V920H1646V924H1647V924H1648V929H1649V924H1650V929H1651V920H1652V920H1653V910H1654V910H1655V910H1656V915H1657V910H1658V920H1659V920H1660V915H1661V924H1662V915H1663V915H1664V910H1665V915H1666V920H1667V915H1668V915H1669V910H1670V910H1671V920H1672V910H1673V915H1674V915H1675V910H1676V915H1677V915H1678V910H1679V910H1680V910H1681V910H1682V910H1683V920H1684V910H1685V910H1686V910H1687V910H1688V924H1689V920H1690V915H1691V915H1692V906H1693V910H1694V910H1695V915H1696V906H1697V910H1698V910H1699V915H1700V915H1701V920H1702V910H1703V910H1704V906H1705V910H1706V924H1707V915H1708V910H1709V906H1710V910H1711V910H1712V924H1713V910H1714V915H1715V901H1716V910H1717V910H1718V910H1719V915H1720V906H1721V906H1722V915H1723V910H1724V906H1725V910H1726V910H1727V915H1728V910H1729V906H1730V906H1731V910H1732V901H1733V910H1734V920H1735V906H1736V910H1737V920H1738V915H1739V910H1740V924H1741V910H1742V941Z" fill="#0052ff"/>
 <g stroke="#8c8060" stroke-width="1" stroke-dasharray="1 2" clip-path="url(#cpB)"><line x1="206" y1="573.5" x2="1874" y2="573.5"/><line x1="206" y1="601.5" x2="1874" y2="601.5"/><line x1="206" y1="629.5" x2="1874" y2="629.5"/><line x1="206" y1="657.5" x2="1874" y2="657.5"/><line x1="206" y1="685.5" x2="1874" y2="685.5"/><line x1="206" y1="714.5" x2="1874" y2="714.5"/><line x1="206" y1="742.5" x2="1874" y2="742.5"/><line x1="206" y1="770.5" x2="1874" y2="770.5"/><line x1="206" y1="798.5" x2="1874" y2="798.5"/><line x1="206" y1="826.5" x2="1874" y2="826.5"/><line x1="206" y1="854.5" x2="1874" y2="854.5"/><line x1="206" y1="882.5" x2="1874" y2="882.5"/><line x1="206" y1="910.5" x2="1874" y2="910.5"/><line x1="372.5" y1="568" x2="372.5" y2="942"/><line x1="539.5" y1="568" x2="539.5" y2="942"/><line x1="706.5" y1="568" x2="706.5" y2="942"/><line x1="873.5" y1="568" x2="873.5" y2="942"/><line x1="1040.5" y1="568" x2="1040.5" y2="942"/><line x1="1207.5" y1="568" x2="1207.5" y2="942"/><line x1="1374.5" y1="568" x2="1374.5" y2="942"/><line x1="1541.5" y1="568" x2="1541.5" y2="942"/><line x1="1708.5" y1="568" x2="1708.5" y2="942"/></g>
 <line x1="1743" y1="565" x2="1743" y2="941" stroke="#1464ff" stroke-width="2" stroke-dasharray="4 2" stroke-dashoffset="3"/>
</svg>

<div id="tb"></div>
<svg class="t" style="left:0;top:0" width="600" height="37" viewBox="0 0 600 37">
<defs>
 <radialGradient id="gRed" cx="35%" cy="30%" r="75%"><stop offset="0" stop-color="#ff8a70"/><stop offset="0.5" stop-color="#e83a22"/><stop offset="1" stop-color="#b81a10"/></radialGradient>
 <linearGradient id="gSky" x1="0" y1="0" x2="0" y2="1"><stop offset="0" stop-color="#3a7fd0"/><stop offset="1" stop-color="#b8d8f0"/></linearGradient>
 <linearGradient id="gGreen" x1="0" y1="0" x2="0" y2="1"><stop offset="0" stop-color="#7af070"/><stop offset="1" stop-color="#10a010"/></linearGradient>
 <radialGradient id="gDisc" cx="40%" cy="35%" r="70%"><stop offset="0" stop-color="#ffffff"/><stop offset="0.7" stop-color="#dcdcf2"/><stop offset="1" stop-color="#a8a8c8"/></radialGradient>
 <linearGradient id="gFire" x1="0" y1="0" x2="0" y2="1"><stop offset="0" stop-color="#ff3010"/><stop offset="0.6" stop-color="#ff8a20"/><stop offset="1" stop-color="#ffd040"/></linearGradient>
</defs>
<!-- 1 power -->
<ellipse cx="20" cy="27" rx="6.5" ry="1.4" fill="#b8c0c8" opacity="0.5"/>
<path d="M14.6 11.2A7.6 7.3 0 1 0 23.2 10.3" fill="none" stroke="#dc2a14" stroke-width="3.8" stroke-linecap="round"/>
<path d="M13.2 16A6 6 0 0 1 15.5 12" fill="none" stroke="#ff8a70" stroke-width="1.1" opacity="0.7"/>
<path d="M17.6 7.8L19.4 14" fill="none" stroke="#e43a20" stroke-width="3.9" stroke-linecap="round"/>
<!-- 2 gears -->
<circle cx="49.8" cy="12.9" r="4.6" fill="#f4b424"/>
<circle cx="49.8" cy="12.9" r="5.1" fill="none" stroke="#f4b424" stroke-width="1.2" stroke-dasharray="1.3 1.1"/>
<ellipse cx="49.6" cy="12.9" rx="1.1" ry="1.5" fill="#f0f4ff"/>
<ellipse cx="57.4" cy="23.5" rx="5.7" ry="6.3" fill="#1a80e8"/>
<ellipse cx="57.4" cy="23.5" rx="6.3" ry="6.9" fill="none" stroke="#1a80e8" stroke-width="1.3" stroke-dasharray="1.4 1.2"/>
<ellipse cx="57.5" cy="23.4" rx="1.3" ry="1.8" fill="#e8f0ff"/>
<!-- 3 active button + photo camera -->
<rect x="73.5" y="3.5" width="33" height="32" fill="#e4ecf6" stroke="#9a9a9a"/>
<path d="M106.5 3.5V35.5H73.5" fill="none" stroke="#ffffff"/>
<path d="M80 12L100 9.3L100.6 20.5L80.6 23Z" fill="url(#gSky)"/>
<path d="M86.5 21L88.8 17L90.5 16.8L92 19L95 17.5L97.5 16L100.5 17.5L100.6 20.5L86.5 22Z" fill="#6a4a48"/>
<path d="M90 20.5L94 19.5L100.6 19.8L100.6 21L90 21.5Z" fill="#203020"/>
<defs><linearGradient id="gCam" x1="0" y1="0" x2="0" y2="1"><stop offset="0" stop-color="#fbfbfb"/><stop offset="1" stop-color="#c4c4c4"/></linearGradient></defs>
<path d="M79.5 21.5H96L97 25.5L95.5 29.5H80.5L79.5 27Z" fill="url(#gCam)"/>
<path d="M80 29.5H95.5" stroke="#707070" stroke-width="1"/>
<circle cx="93.3" cy="24.8" r="2.2" fill="#1a3a1a"/>
<ellipse cx="99" cy="22" rx="3" ry="1.8" fill="#4a6a10"/>
<!-- 4 pdf -->
<path d="M113.5 15.8L118 14.3L119.5 13L129.5 10.8L137 19.4L121.3 27.6Z" fill="#b81818"/>
<path d="M113.5 15.8L129.5 10.8L137 19.4L121.3 27.6Z" fill="#cc2a1a"/>
<text x="125" y="21.5" font-family="Liberation Sans" font-size="6.5" font-weight="bold" fill="#ffd8d0" transform="rotate(-28 125 19)" text-anchor="middle">.pdf</text>
<!-- 5 html -->
<path d="M148.5 15.8L164.5 10.8L172 19.4L156.3 27.6Z" fill="#5a5a5a"/>
<path d="M148.5 15.8L153 14.3L154.5 12.8L158 12.3L159 11.5" fill="none" stroke="#6a6a6a" stroke-width="1.2"/>
<text x="160" y="21.5" font-family="Liberation Sans" font-size="6" font-weight="bold" fill="#d8d8d8" transform="rotate(-28 160 19)" text-anchor="middle">.html</text>
<!-- 6 printer -->
<path d="M184.4 8.6L193 8.4L193.7 17L185 17.7Z" fill="#f2f2f2" stroke="#a8a8a8" stroke-width="0.8"/>
<path d="M184 19.4L187 18L203.4 16.7L203.8 21.4L192 28.4L184 24.7Z" fill="#f4f4f4" stroke="#a0a0a0" stroke-width="0.8"/>
<path d="M187.4 18L195.4 13.7L201.4 17.4L193.4 22Z" fill="#2a78dc"/>
<path d="M192 28.4L203.8 21.4L203.8 23L192.5 29.5Z" fill="#b8b8b8"/>
<path d="M194.7 25.4L205.8 23.4L205.8 24.9L195.4 28Z" fill="#d0d0d0" stroke="#a8a8a8" stroke-width="0.5"/>
<!-- sep 1 -->
<rect x="213.5" y="4.5" width="4" height="29.5" rx="2" fill="#e8eef6" stroke="#9aa2ac"/>
<!-- 7 refresh -->
<g fill="#22e022" stroke="#0e6a0e" stroke-width="0.9" stroke-linejoin="round">
<path d="M244.9 18.2C244.5 12 240 8.8 235.5 8.8C231.5 8.8 228.8 11 227.3 13.3L224.3 14.4L229 21L235.4 16.8L232.3 15.6C233.3 13.8 235 12.8 236.8 12.8C239.2 12.8 241.6 14.6 242.6 18.8Z"/>
<path d="M227.4 21.8C228.2 26.8 232 29.6 236.2 29.6C240 29.6 242.8 27.6 244.6 25.2L246.8 25L244.7 18.7L236.7 21.4L240.2 22.6C239.4 24.6 237.8 25.6 236 25.6C233.2 25.6 231 23.8 229.6 21.4Z"/>
</g>
<path d="M228.5 13.5C230 11.3 232.5 10 235 10" fill="none" stroke="#c8ffc0" stroke-width="1" opacity="0.8"/>
<path d="M237 22.8C239 22 241.5 21 243.5 20.5" fill="none" stroke="#e8ffe0" stroke-width="1" opacity="0.8"/>
<!-- 8 black disc -->
<circle cx="271.5" cy="18.8" r="10.3" fill="#101010"/>
<circle cx="271.5" cy="18.8" r="7" fill="none" stroke="#333" stroke-width="0.8"/>
<circle cx="271.5" cy="17.8" r="3.2" fill="#22a822"/>
<circle cx="277.5" cy="25" r="4.6" fill="#2aa02a" stroke="#0a600a" stroke-width="0.6"/>
<path d="M275.5 25.5A2.2 2.2 0 0 1 279.5 24.5" fill="none" stroke="#e8ffe8" stroke-width="1.1"/>
<!-- 9 disc with arrow -->
<ellipse cx="305" cy="19" rx="8.8" ry="9.8" fill="url(#gDisc)" stroke="#b0b0c8" stroke-width="0.6"/>
<circle cx="305" cy="18.5" r="2.4" fill="#c8c8e0" stroke="#9090b0" stroke-width="0.6"/>
<path d="M315.5 9L318 12L314.5 14.5L316.5 17L309 17.5L309.5 10.5L312 12.5Z" fill="#50d040" stroke="#30a030" stroke-width="0.6"/>
<!-- 10 red x -->
<ellipse cx="341" cy="28" rx="7" ry="1.5" fill="#b0b8c0" opacity="0.5"/>
<circle cx="340.8" cy="16.8" r="10" fill="url(#gRed)"/>
<path d="M336.2 12.2L345.4 21.4M345.4 12.2L336.2 21.4" stroke="#ffffff" stroke-width="3.2"/>
<!-- sep 2 -->
<rect x="359.5" y="4.5" width="4" height="29.5" rx="2" fill="#e8eef6" stroke="#9aa2ac"/>
<!-- 11 blue disc -->
<ellipse cx="382.1" cy="18.8" rx="9.6" ry="11.1" fill="#5a8ed8" stroke="#c8c8c0" stroke-width="0.9"/>
<ellipse cx="381" cy="19" rx="4.3" ry="5.3" fill="#e0e8f4" stroke="#c4c4c8" stroke-width="1.8"/>
<rect x="378" y="26.3" width="7.8" height="1.6" fill="#f0f4ff"/>
<!-- 12 drive red disc -->
<path d="M405.8 18.8Q406 17 408 16.2L425 19.5Q428 20.5 428 22.5Q427.5 24.5 425 25.5L418 26.8Q416.5 27 415 26.6L407.5 23.8Q405.8 23 405.8 21Z" fill="#e8e8e8" stroke="#707070" stroke-width="0.9"/>
<path d="M406.5 21.8L416 25.2L427.5 22" fill="none" stroke="#909090" stroke-width="0.8"/>
<ellipse cx="416.1" cy="15.1" rx="5.9" ry="5.3" fill="#d81c1c"/>
<ellipse cx="414.6" cy="14.8" rx="1.6" ry="1.3" fill="#c0b8b8"/>
<path d="M416.5 19.5L420.5 17.5" stroke="#ffb0b0" stroke-width="1"/>
<!-- 13 disc down arrow -->
<ellipse cx="450.5" cy="16" rx="8.8" ry="8.3" fill="url(#gDisc)" stroke="#a8a8c0" stroke-width="0.6"/>
<rect x="446" y="18.5" width="16" height="6.5" rx="3" fill="#f4f4f8" stroke="#8a8a9a" stroke-width="0.8"/>
<path d="M451.5 24H456.5V26.5H459L454 31L449 26.5H451.5Z" fill="#40c040"/>
<!-- 14 flame disc -->
<ellipse cx="489.7" cy="19.4" rx="6.4" ry="9.3" fill="url(#gDisc)" stroke="#8a8aa0" stroke-width="0.8"/>
<path d="M477 15C477.5 12 479.5 10 481.8 8C482.8 9.5 483.5 11 484 12C484.8 11 485.6 10.2 486.4 9.8C487.2 11 487.8 12.5 488 14C488.8 13.5 489.6 13.5 490.6 13.7C490.8 16.5 489.8 18.8 487.8 20.2C486.2 21.2 484.6 21.6 483.4 22C483.6 24 484 26 484.6 27.6C481 26.5 477.8 23.5 477.2 19.5C477 18 476.9 16.5 477 15Z" fill="url(#gFire)" stroke="#e02010" stroke-width="0.7"/>
<path d="M479 17C479.5 14.5 481 13 482 12.5C482.5 14 483.5 15 484.5 15.5C485 17.5 484 19.5 482 20C480.5 20 479 19 479 17Z" fill="#ffd0a0" opacity="0.7"/>
<!-- 15 bar chart -->
<path d="M512.5 10L526 9L530.5 26.5L514 27.5Z" fill="#f6f6f6" stroke="#c8c8c8" stroke-width="0.6"/>
<path d="M513.5 16L517.5 15L519 26.5L515 27Z" fill="#1a6ad8"/>
<path d="M518 13L522.5 12L524 26L519.5 26.5Z" fill="#28b428"/>
<path d="M523 15L527.5 14.5L529.5 25.5L524.5 26Z" fill="#f09020"/>
<!-- 16 jitter -->
<circle cx="557" cy="17" r="10" fill="#e2e2e2" stroke="#d0d0d0" stroke-width="0.8"/>
<circle cx="557" cy="17" r="2.5" fill="#f8f8f8" stroke="#c8c8c8" stroke-width="0.6"/>
<text x="557" y="28.5" font-family="Liberation Sans" font-size="8.5" font-weight="bold" fill="#707070" text-anchor="middle">Jitter</text>
</svg>
<svg class="t" style="left:0;top:40px" width="44" height="25" viewBox="0 40 44 25">
<g fill="none" stroke="#000" stroke-width="1.3" stroke-linecap="round" stroke-linejoin="round">
<path d="M5.5 49.5V59.8"/><path d="M6 53L10.5 55.5"/><path d="M8.3 50.3V51.5M10.4 50.3V51.5" stroke-width="1.1"/>
<path d="M13.5 50.5H18"/><path d="M12.5 53.2H18C17.5 56.5 16 58.5 13.2 59.6"/>
<path d="M26.5 49.6C24.8 52 22.5 54 20.5 55.3"/><path d="M24.6 52.8V59.8"/>
<path d="M29.5 51.6H35.6C35 55.5 33.5 58 30.5 59.6"/><path d="M34.4 49.2V50.3M36.5 49.2V50.3" stroke-width="1.1"/>
</g>
<circle cx="38.5" cy="53.6" r="0.8" fill="#000"/><circle cx="38.5" cy="57.5" r="0.8" fill="#000"/>
</svg>
<div class="b" style="left:43px;top:42px;width:1808px;height:26px;border:1px solid #acacac;border-radius:3px;background:linear-gradient(#f6f6f6,#e4e4e4);"></div>
<div class="b" style="left:1834px;top:43px;width:1px;height:24px;background:#c4c4c4;"></div>
<svg class="t" style="left:1837px;top:52px" width="11" height="7"><path d="M0.5 0.5H9.5L5 5.5Z" fill="#000"/></svg>
<div class="b" style="left:1854px;top:42px;width:30px;height:26px;border:1px solid #adadad;border-radius:3px;background:linear-gradient(#f6f6f6,#e4e4e4);"></div>
<div class="b" style="left:1887px;top:42px;width:30px;height:26px;border:1px solid #adadad;border-radius:3px;background:linear-gradient(#f6f6f6,#e4e4e4);"></div>
<svg class="t" style="left:1854px;top:42px" width="64" height="26" viewBox="0 0 64 26">
<defs><radialGradient id="gBl" cx="40%" cy="35%" r="70%"><stop offset="0" stop-color="#8ad0ff"/><stop offset="1" stop-color="#2a8ae0"/></radialGradient>
<radialGradient id="gLk" cx="40%" cy="35%" r="70%"><stop offset="0" stop-color="#fff080"/><stop offset="1" stop-color="#e0a800"/></radialGradient></defs>
<circle cx="15" cy="13" r="8" fill="url(#gBl)" stroke="#3a90d8" stroke-width="0.8"/>
<path d="M16 8.5V17.5L9.5 13Z" fill="#fff"/><rect x="17" y="8.5" width="2" height="9" fill="#fff"/>
<path d="M45 12V8.5A3 3 0 0 1 51 8.5V12" fill="none" stroke="#b8b8b8" stroke-width="1.6"/>
<circle cx="48" cy="15.5" r="4.8" fill="url(#gLk)"/>
<rect x="47.3" y="13.5" width="1.4" height="4" fill="#503000"/>
</svg>
<div class="t" style="left:48px;top:50.02px;font:12.5px 'Liberation Mono',monospace;transform:scaleX(1.3333);transform-origin:0 0;">HL-DT-ST BD-RE  WH16NS58  1.V6 [ G: ][SN:KLHJ2SE0437 ]</div>
<div class="b" style="left:6px;top:74px;width:6px;height:912px;border:1px solid #a9a9a9;"></div>
<div class="b" style="left:140px;top:74px;width:1px;height:912px;background:#a9a9a9;"></div>
<div class="b" style="left:15px;top:74px;width:20px;height:20px;border:2px solid #000;border-radius:3px;background:#00c000;"></div>
<div class="t" style="left:39.50px;top:76.54px;font:normal 12px 'Liberation Sans';transform:scaleX(0.8669);transform-origin:0 0;">LDC</div>
<div class="grp" style="left:15px;top:97px;width:122px;height:98px"></div>
<div class="t" style="left:35.30px;top:105.54px;font:normal 12px 'Liberation Sans';transform:scaleX(1.0251);transform-origin:0 0;">Total</div>
<div class="t" style="left:84.40px;top:105.54px;font:normal 12px 'Liberation Sans';transform:scaleX(0.8694);transform-origin:0 0;">35476130</div>
<div class="t" style="left:37.60px;top:127.34px;font:normal 12px 'Liberation Sans';transform:scaleX(0.8425);transform-origin:0 0;">Max</div>
<div class="t" style="left:114.40px;top:127.34px;font:normal 12px 'Liberation Sans';transform:scaleX(0.8207);transform-origin:0 0;">623</div>
<div class="t" style="left:86.30px;top:149.44px;font:normal 12px 'Liberation Sans';transform:scaleX(0.8876);transform-origin:0 0;">11590MB</div>
<div class="t" style="left:38.70px;top:171.44px;font:normal 12px 'Liberation Sans';transform:scaleX(0.9198);transform-origin:0 0;">Avg</div>
<div class="t" style="left:106.50px;top:171.44px;font:normal 12px 'Liberation Sans';transform:scaleX(0.8104);transform-origin:0 0;">94.06</div>
<div class="b" style="left:15px;top:223px;width:20px;height:20px;border:2px solid #000;border-radius:3px;background:#0050ff;"></div>
<div class="t" style="left:39.50px;top:225.64px;font:normal 12px 'Liberation Sans';transform:scaleX(0.8532);transform-origin:0 0;">BIS</div>
<div class="grp" style="left:15px;top:246px;width:122px;height:98px"></div>
<div class="t" style="left:34.90px;top:254.94px;font:normal 12px 'Liberation Sans';transform:scaleX(1.0251);transform-origin:0 0;">Total</div>
<div class="t" style="left:96.60px;top:254.94px;font:normal 12px 'Liberation Sans';transform:scaleX(0.8620);transform-origin:0 0;">500561</div>
<div class="t" style="left:37.60px;top:276.74px;font:normal 12px 'Liberation Sans';transform:scaleX(0.8558);transform-origin:0 0;">Max</div>
<div class="t" style="left:120.90px;top:276.74px;font:normal 12px 'Liberation Sans';transform:scaleX(0.7679);transform-origin:0 0;">24</div>
<div class="t" style="left:86.20px;top:298.84px;font:normal 12px 'Liberation Sans';transform:scaleX(0.8800);transform-origin:0 0;">14766MB</div>
<div class="t" style="left:38.70px;top:320.64px;font:normal 12px 'Liberation Sans';transform:scaleX(0.9501);transform-origin:0 0;">Avg</div>
<div class="t" style="left:113.50px;top:320.64px;font:normal 12px 'Liberation Sans';transform:scaleX(0.7559);transform-origin:0 0;">1.33</div>
<div class="grp" style="left:15px;top:372px;width:122px;height:12px;border-radius:3px"></div>
<div class="grp" style="left:15px;top:393px;width:122px;height:27px"></div>
<div class="b" style="left:22px;top:389px;width:58px;height:8px;background:#f0f0f0;"></div>
<div class="t" style="left:24.70px;top:385.54px;font:normal 12px 'Liberation Sans';transform:scaleX(0.9242);transform-origin:0 0;">Cur Speed</div>
<div class="t" style="left:62.75px;top:402.44px;font:normal 12px 'Liberation Sans';transform:scaleX(0.8436);transform-origin:0 0;">4.00X</div>
<div class="cb" style="left:15px;top:807.4px"></div>
<svg class="t" style="left:15px;top:807.4px" width="12" height="12"><path d="M3.2 3.2L8.8 8.8M8.8 3.2L3.2 8.8" stroke="#000" stroke-width="2.6" stroke-linecap="round"/></svg>
<div class="t" style="left:33.50px;top:805.54px;font:normal 12px 'Liberation Sans';transform:scaleX(0.8780);transform-origin:0 0;">Layer1</div>
<div class="cb" style="left:15px;top:827.3px"></div>
<svg class="t" style="left:15px;top:827.3px" width="12" height="12"><path d="M3.2 3.2L8.8 8.8M8.8 3.2L3.2 8.8" stroke="#000" stroke-width="2.6" stroke-linecap="round"/></svg>
<div class="t" style="left:33.50px;top:825.44px;font:normal 12px 'Liberation Sans';transform:scaleX(0.8780);transform-origin:0 0;">Layer2</div>
<div class="cb" style="left:15px;top:847.2px"></div>
<svg class="t" style="left:15px;top:847.2px" width="12" height="12"><path d="M3.2 3.2L8.8 8.8M8.8 3.2L3.2 8.8" stroke="#000" stroke-width="2.6" stroke-linecap="round"/></svg>
<div class="t" style="left:33.50px;top:845.34px;font:normal 12px 'Liberation Sans';transform:scaleX(0.9303);transform-origin:0 0;">LayerBreak Line</div>
<div class="cb" style="left:15px;top:867.1px"></div>
<svg class="t" style="left:15px;top:867.1px" width="12" height="12"><path d="M3.2 3.2L8.8 8.8M8.8 3.2L3.2 8.8" stroke="#000" stroke-width="2.6" stroke-linecap="round"/></svg>
<div class="t" style="left:33.50px;top:865.24px;font:normal 12px 'Liberation Sans';">Eject After Testing</div>
<div class="cb" style="left:15px;top:887.0px"></div>
<div class="t" style="left:33.50px;top:885.14px;font:normal 12px 'Liberation Sans';transform:scaleX(0.9794);transform-origin:0 0;">MM X-Axis</div>
<div class="grp" style="left:15px;top:949px;width:122px;height:37px"></div>
<div class="b" style="left:22px;top:944px;width:30px;height:8px;background:#f0f0f0;"></div>
<svg class="t" style="left:20px;top:938px" width="34" height="20" viewBox="20 938 34 20">
<g fill="none" stroke="#000" stroke-width="1.05" stroke-linecap="square">
<rect x="25.5" y="944.5" width="2" height="7"/><path d="M25.5 947.8H27.5"/>
<path d="M30.3 944.6H34.5M32.5 943.2V946.4M29.4 946.6H35.6M29.4 949.5H35.6M34.5 946.6V953.6H33.3M30.8 950.5L31.4 951.3"/>
<path d="M37.6 954V943.5H41.3V947.5H37.6M37.6 945.5H41.3"/>
<path d="M43.6 943.5H47.5V953.6H46.5M43.6 947.5H47.5M43.6 945.5H47.5M43.6 943.5V947.5"/>
<rect x="40.6" y="949.6" width="3.8" height="4"/><path d="M40.6 951.8H44.4"/>
</g>
</svg>
<div class="t" style="left:106.70px;top:963.44px;font:normal 12px 'Liberation Sans';transform:scaleX(0.8088);transform-origin:0 0;">31:06</div>
<div class="t" style="left:164.80px;top:105.78px;font:bold 22px 'Liberation Sans';transform:scaleX(1.0200);transform-origin:0 0;">900</div>
<div class="t" style="left:175.70px;top:148.46px;font:normal 15.4px 'Liberation Sans';transform:scaleX(1.0172);transform-origin:0 0;">800</div>
<div class="t" style="left:175.70px;top:185.96px;font:normal 15.4px 'Liberation Sans';transform:scaleX(1.0172);transform-origin:0 0;">700</div>
<div class="t" style="left:175.70px;top:223.46px;font:normal 15.4px 'Liberation Sans';transform:scaleX(1.0172);transform-origin:0 0;">600</div>
<div class="t" style="left:175.70px;top:260.96px;font:normal 15.4px 'Liberation Sans';transform:scaleX(1.0172);transform-origin:0 0;">500</div>
<div class="t" style="left:175.70px;top:298.46px;font:normal 15.4px 'Liberation Sans';transform:scaleX(1.0172);transform-origin:0 0;">400</div>
<div class="t" style="left:175.70px;top:335.96px;font:normal 15.4px 'Liberation Sans';transform:scaleX(1.0172);transform-origin:0 0;">300</div>
<div class="t" style="left:175.70px;top:373.46px;font:normal 15.4px 'Liberation Sans';transform:scaleX(1.0172);transform-origin:0 0;">200</div>
<div class="t" style="left:174.64px;top:410.96px;font:normal 15.4px 'Liberation Sans';transform:scaleX(1.0593);transform-origin:0 0;">100</div>
<div class="t" style="left:178.00px;top:561.28px;font:bold 22px 'Liberation Sans';">78</div>
<div class="t" style="left:178.00px;top:589.38px;font:bold 22px 'Liberation Sans';">72</div>
<div class="t" style="left:184.30px;top:621.46px;font:normal 15.4px 'Liberation Sans';transform:scaleX(1.0085);transform-origin:0 0;">66</div>
<div class="t" style="left:184.30px;top:649.56px;font:normal 15.4px 'Liberation Sans';transform:scaleX(1.0085);transform-origin:0 0;">60</div>
<div class="t" style="left:184.30px;top:677.66px;font:normal 15.4px 'Liberation Sans';transform:scaleX(0.9510);transform-origin:0 0;">54</div>
<div class="t" style="left:184.30px;top:705.76px;font:normal 15.4px 'Liberation Sans';transform:scaleX(1.0085);transform-origin:0 0;">48</div>
<div class="t" style="left:184.30px;top:733.86px;font:normal 15.4px 'Liberation Sans';transform:scaleX(1.0085);transform-origin:0 0;">42</div>
<div class="t" style="left:184.30px;top:761.96px;font:normal 15.4px 'Liberation Sans';transform:scaleX(1.0085);transform-origin:0 0;">36</div>
<div class="t" style="left:184.30px;top:790.06px;font:normal 15.4px 'Liberation Sans';transform:scaleX(1.0085);transform-origin:0 0;">30</div>
<div class="t" style="left:184.30px;top:818.16px;font:normal 15.4px 'Liberation Sans';transform:scaleX(0.9510);transform-origin:0 0;">24</div>
<div class="t" style="left:183.23px;top:846.26px;font:normal 15.4px 'Liberation Sans';transform:scaleX(1.0733);transform-origin:0 0;">18</div>
<div class="t" style="left:183.23px;top:874.36px;font:normal 15.4px 'Liberation Sans';transform:scaleX(1.0733);transform-origin:0 0;">12</div>
<div class="t" style="left:192.30px;top:902.46px;font:normal 15.4px 'Liberation Sans';transform:scaleX(1.0875);transform-origin:0 0;">6</div>
<div class="t" style="left:524.50px;top:519.84px;font:normal 12px 'Liberation Sans';transform:scaleX(1.0058);transform-origin:0 0;">5 GB</div>
<div class="t" style="left:855.05px;top:519.84px;font:normal 12px 'Liberation Sans';transform:scaleX(1.0054);transform-origin:0 0;">10 GB</div>
<div class="t" style="left:1188.95px;top:519.84px;font:normal 12px 'Liberation Sans';transform:scaleX(1.0054);transform-origin:0 0;">15 GB</div>
<div class="t" style="left:1522.85px;top:519.84px;font:normal 12px 'Liberation Sans';transform:scaleX(1.0054);transform-origin:0 0;">20 GB</div>
<div style="position:absolute;left:0;top:942px;width:1920px;height:35px;overflow:hidden">
<div class="t" style="left:524.50px;top:24.84px;font:normal 12px 'Liberation Sans';transform:scaleX(1.0058);transform-origin:0 0;">5 GB</div>
<div class="t" style="left:855.05px;top:24.84px;font:normal 12px 'Liberation Sans';transform:scaleX(1.0054);transform-origin:0 0;">10 GB</div>
<div class="t" style="left:1188.95px;top:24.84px;font:normal 12px 'Liberation Sans';transform:scaleX(1.0054);transform-origin:0 0;">15 GB</div>
<div class="t" style="left:1522.85px;top:24.84px;font:normal 12px 'Liberation Sans';transform:scaleX(1.0054);transform-origin:0 0;">20 GB</div>
<div class="t" style="left:1749.80px;top:-2.16px;font:normal 12px 'Liberation Sans';transform:scaleX(0.8978);transform-origin:0 0;color:#b4b4b4;">DiscSize</div>
</div>
<div class="t" style="left:1755.60px;top:903.64px;font:normal 12px 'Liberation Sans';transform:scaleX(0.9104);transform-origin:0 0;color:#fff;">23578 MB</div>
<div class="t" style="left:1742.80px;top:943.54px;font:normal 12px 'Liberation Sans';transform:scaleX(0.9260);transform-origin:0 0;color:#0050ff;">LastRecord</div>
<div class="b" style="left:2px;top:994px;width:381px;height:22px;border:2px solid #7d7d7d;border-radius:3px;background:#fff;"></div>
<div class="sp" style="left:385px;width:382px"></div>
<div class="sp" style="left:769px;width:383px"></div>
<div class="sp" style="left:1154px;width:382px"></div>
<div class="sp" style="left:1538px;width:390px"></div>
<div class="t" style="left:783.20px;top:997.84px;font:normal 12px 'Liberation Sans';transform:scaleX(0.8514);transform-origin:0 0;">CPU:BFEBFBFF000906E9</div>
<div class="t" style="left:1156.50px;top:997.84px;font:normal 12px 'Liberation Sans';transform:scaleX(0.9449);transform-origin:0 0;">(0)Finalized</div>
<div class="t" style="left:1225.00px;top:997.84px;font:normal 12px 'Liberation Sans';transform:scaleX(0.9452);transform-origin:0 0;">BD-ROM</div>
<div class="t" style="left:1281.00px;top:997.84px;font:normal 12px 'Liberation Sans';transform:scaleX(0.9665);transform-origin:0 0;">CMCMAG-BA5/000</div>
<div class="t" style="left:1391.00px;top:997.84px;font:normal 12px 'Liberation Sans';transform:scaleX(0.9232);transform-origin:0 0;">23578 MB</div>
<div class="t" style="left:1540.40px;top:997.84px;font:normal 12px 'Liberation Sans';transform:scaleX(0.9701);transform-origin:0 0;">Recorder info</div>
<div class="b" style="left:1617px;top:1002px;width:2px;height:2px;background:#000;"></div>
<div class="b" style="left:1617px;top:1007px;width:2px;height:2px;background:#000;"></div>
<div class="t" style="left:1623.00px;top:997.84px;font:normal 12px 'Liberation Sans';transform:scaleX(0.8648);transform-origin:0 0;">PIONEER</div>
<div class="t" style="left:1697.00px;top:997.84px;font:normal 12px 'Liberation Sans';transform:scaleX(0.9145);transform-origin:0 0;">BD-RW</div>
<div class="t" style="left:1744.00px;top:997.84px;font:normal 12px 'Liberation Sans';transform:scaleX(0.8867);transform-origin:0 0;">BDR-S12USLDL002577WL</div>

</body></html>
